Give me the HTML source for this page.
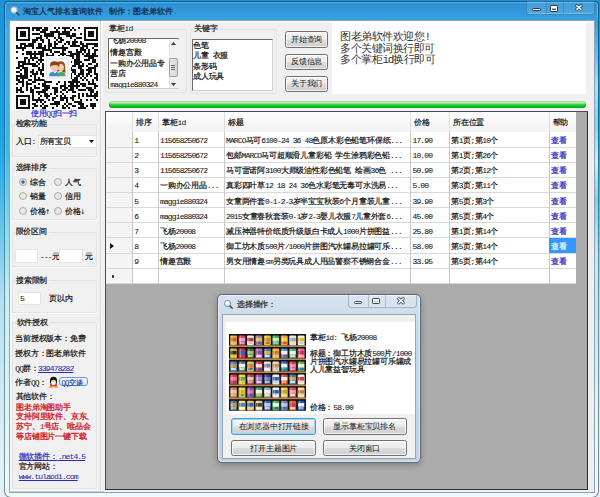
<!DOCTYPE html>
<html><head><meta charset="utf-8"><style>
html,body{margin:0;padding:0;width:600px;height:497px;overflow:hidden;position:relative;background:#fff}
.a{position:absolute}
.t{white-space:nowrap;font-family:"Liberation Sans",sans-serif;line-height:9px;-webkit-text-stroke-width:0.2px}
.m{font-family:"Liberation Mono",monospace;font-size:1em;letter-spacing:-0.109em;-webkit-text-stroke-width:0.05px}
svg{display:block}
</style></head><body>
<div class="a " style="left:0px;top:0px;width:600px;height:497px;background:linear-gradient(to bottom,#1c94d4 0%,#1aa2e2 25%,#20acea 32%,#60c4ec 45%,#b0e0f0 60%,#c8e8f4 75%,#deeff6 90%,#e6f2f6 100%)"></div><div class="a " style="left:4px;top:1px;width:595px;height:497px;border-radius:4px 4px 7px 7px;background:linear-gradient(to bottom,#0c5a8c 0%,#1a6e98 25%,#4a8a9c 45%,#72909a 60%,#788c92 100%)"></div><div class="a " style="left:5px;top:2px;width:593px;height:495px;border-radius:3px 3px 6px 6px;background:linear-gradient(to bottom,#5eb4e4 0%,#60c8f0 30%,#a0ecf4 55%,#c4f6f8 65%,#e0fafa 85%,#f0fcfc 100%)"></div><div class="a " style="left:6px;top:3px;width:591px;height:493px;border-radius:2px 2px 5px 5px;background:linear-gradient(to bottom,#2e90d4 0%,#36a2e0 3.6%,#4aaae0 5%,#38b8ec 30%,#80d8f0 45%,#c4f2f6 60%,#dcf6f6 85%,#eefafa 100%)"></div><div class="a " style="left:594.5px;top:20px;width:3.5px;height:472px;background:linear-gradient(to bottom,#3aa0dc 0%,#5ab8e8 6%,#a8e2f4 14%,#7ad4f2 22%,#c8f2f8 30%,#78d6f0 38%,#c0eef6 50%,#b8ecf4 62%,#dcf6f8 80%,#eefafa 100%)"></div><svg class="a" style="left:9px;top:5px" width="12" height="12" viewBox="0 0 12 12"><circle cx="5" cy="5" r="3.3" fill="#dff2fb" stroke="#8aa8b8" stroke-width="1.2"/><circle cx="4.2" cy="4.2" r="1.2" fill="#fff"/><line x1="7.3" y1="7.3" x2="10.5" y2="10.5" stroke="#3a4a5a" stroke-width="1.6"/></svg><div class="a t " style="left:23.3px;top:7px;font-size:8px;color:#10223a">淘宝人气排名查询软件</div><div class="a t " style="left:109.2px;top:7px;font-size:8px;color:#10223a">制作</div><div class="a t " style="left:125px;top:7px;font-size:8px;color:#10223a">：</div><div class="a t " style="left:133.2px;top:7px;font-size:8px;color:#10223a">图老弟软件</div><div class="a " style="left:526px;top:1px;width:68.7px;height:13.5px;border:1px solid rgba(30,60,90,0.30);border-top:none;border-radius:0 0 4px 4px;box-sizing:border-box;box-shadow:inset 0 -1px 0 rgba(255,255,255,0.25);background:rgba(255,255,255,0.12)"></div><div class="a " style="left:546px;top:1px;width:1px;height:12.5px;background:rgba(30,60,90,0.22)"></div><div class="a " style="left:563.3px;top:1px;width:1px;height:12.5px;background:rgba(30,60,90,0.22)"></div><div class="a " style="left:532.3px;top:8.2px;width:8.4px;height:2.8px;background:#fff;border:1px solid #2a3a4a;border-radius:1.5px;box-sizing:border-box"></div><div class="a " style="left:550px;top:5.3px;width:8px;height:6.4px;border:1px solid #2a3a4a;border-radius:1.5px;box-sizing:border-box;background:#5a6470;box-shadow:inset 0 0 0 1px #fff,inset 0 1.5px 0 1px #fff"></div><svg class="a" style="left:575px;top:4.2px;overflow:visible" width="7.8" height="7.2" viewBox="0 0 7.8 7.2"><path d="M1.8 1.8 L6.0 5.4 M6.0 1.8 L1.8 5.4" stroke="#2a3a4a" stroke-width="3.2" stroke-linecap="round" opacity="0.85"/><path d="M1.8 1.8 L6.0 5.4 M6.0 1.8 L1.8 5.4" stroke="#fff" stroke-width="1.5" stroke-linecap="round"/></svg><div class="a " style="left:9px;top:20px;width:585.5px;height:472.5px;background:#f0f0f0;border:1px solid #8aa2b2;box-sizing:border-box;box-shadow:inset 1px 1px 0 #fff"></div><div class="a " style="left:10px;top:21px;width:92px;height:89px;background:#fbfbfb"></div><svg class="a" style="left:16px;top:27px" width="82" height="82" viewBox="0 0 82 82" shape-rendering="crispEdges"><g fill="#111"><rect x="0" y="0" width="2" height="2"/><rect x="2" y="0" width="2" height="2"/><rect x="4" y="0" width="2" height="2"/><rect x="6" y="0" width="2" height="2"/><rect x="8" y="0" width="2" height="2"/><rect x="10" y="0" width="2" height="2"/><rect x="12" y="0" width="2" height="2"/><rect x="16" y="0" width="2" height="2"/><rect x="18" y="0" width="2" height="2"/><rect x="20" y="0" width="2" height="2"/><rect x="22" y="0" width="2" height="2"/><rect x="24" y="0" width="2" height="2"/><rect x="28" y="0" width="2" height="2"/><rect x="30" y="0" width="2" height="2"/><rect x="38" y="0" width="2" height="2"/><rect x="42" y="0" width="2" height="2"/><rect x="46" y="0" width="2" height="2"/><rect x="48" y="0" width="2" height="2"/><rect x="50" y="0" width="2" height="2"/><rect x="52" y="0" width="2" height="2"/><rect x="56" y="0" width="2" height="2"/><rect x="62" y="0" width="2" height="2"/><rect x="68" y="0" width="2" height="2"/><rect x="70" y="0" width="2" height="2"/><rect x="72" y="0" width="2" height="2"/><rect x="74" y="0" width="2" height="2"/><rect x="76" y="0" width="2" height="2"/><rect x="78" y="0" width="2" height="2"/><rect x="80" y="0" width="2" height="2"/><rect x="0" y="2" width="2" height="2"/><rect x="12" y="2" width="2" height="2"/><rect x="16" y="2" width="2" height="2"/><rect x="20" y="2" width="2" height="2"/><rect x="22" y="2" width="2" height="2"/><rect x="26" y="2" width="2" height="2"/><rect x="28" y="2" width="2" height="2"/><rect x="30" y="2" width="2" height="2"/><rect x="40" y="2" width="2" height="2"/><rect x="48" y="2" width="2" height="2"/><rect x="54" y="2" width="2" height="2"/><rect x="58" y="2" width="2" height="2"/><rect x="68" y="2" width="2" height="2"/><rect x="80" y="2" width="2" height="2"/><rect x="0" y="4" width="2" height="2"/><rect x="4" y="4" width="2" height="2"/><rect x="6" y="4" width="2" height="2"/><rect x="8" y="4" width="2" height="2"/><rect x="12" y="4" width="2" height="2"/><rect x="24" y="4" width="2" height="2"/><rect x="26" y="4" width="2" height="2"/><rect x="28" y="4" width="2" height="2"/><rect x="34" y="4" width="2" height="2"/><rect x="36" y="4" width="2" height="2"/><rect x="38" y="4" width="2" height="2"/><rect x="40" y="4" width="2" height="2"/><rect x="42" y="4" width="2" height="2"/><rect x="46" y="4" width="2" height="2"/><rect x="48" y="4" width="2" height="2"/><rect x="50" y="4" width="2" height="2"/><rect x="52" y="4" width="2" height="2"/><rect x="68" y="4" width="2" height="2"/><rect x="72" y="4" width="2" height="2"/><rect x="74" y="4" width="2" height="2"/><rect x="76" y="4" width="2" height="2"/><rect x="80" y="4" width="2" height="2"/><rect x="0" y="6" width="2" height="2"/><rect x="4" y="6" width="2" height="2"/><rect x="6" y="6" width="2" height="2"/><rect x="8" y="6" width="2" height="2"/><rect x="12" y="6" width="2" height="2"/><rect x="16" y="6" width="2" height="2"/><rect x="18" y="6" width="2" height="2"/><rect x="20" y="6" width="2" height="2"/><rect x="22" y="6" width="2" height="2"/><rect x="28" y="6" width="2" height="2"/><rect x="30" y="6" width="2" height="2"/><rect x="32" y="6" width="2" height="2"/><rect x="34" y="6" width="2" height="2"/><rect x="36" y="6" width="2" height="2"/><rect x="42" y="6" width="2" height="2"/><rect x="44" y="6" width="2" height="2"/><rect x="46" y="6" width="2" height="2"/><rect x="48" y="6" width="2" height="2"/><rect x="50" y="6" width="2" height="2"/><rect x="52" y="6" width="2" height="2"/><rect x="56" y="6" width="2" height="2"/><rect x="58" y="6" width="2" height="2"/><rect x="64" y="6" width="2" height="2"/><rect x="68" y="6" width="2" height="2"/><rect x="72" y="6" width="2" height="2"/><rect x="74" y="6" width="2" height="2"/><rect x="76" y="6" width="2" height="2"/><rect x="80" y="6" width="2" height="2"/><rect x="0" y="8" width="2" height="2"/><rect x="4" y="8" width="2" height="2"/><rect x="6" y="8" width="2" height="2"/><rect x="8" y="8" width="2" height="2"/><rect x="12" y="8" width="2" height="2"/><rect x="24" y="8" width="2" height="2"/><rect x="28" y="8" width="2" height="2"/><rect x="30" y="8" width="2" height="2"/><rect x="32" y="8" width="2" height="2"/><rect x="34" y="8" width="2" height="2"/><rect x="36" y="8" width="2" height="2"/><rect x="42" y="8" width="2" height="2"/><rect x="50" y="8" width="2" height="2"/><rect x="52" y="8" width="2" height="2"/><rect x="54" y="8" width="2" height="2"/><rect x="56" y="8" width="2" height="2"/><rect x="58" y="8" width="2" height="2"/><rect x="68" y="8" width="2" height="2"/><rect x="72" y="8" width="2" height="2"/><rect x="74" y="8" width="2" height="2"/><rect x="76" y="8" width="2" height="2"/><rect x="80" y="8" width="2" height="2"/><rect x="0" y="10" width="2" height="2"/><rect x="12" y="10" width="2" height="2"/><rect x="20" y="10" width="2" height="2"/><rect x="22" y="10" width="2" height="2"/><rect x="24" y="10" width="2" height="2"/><rect x="30" y="10" width="2" height="2"/><rect x="38" y="10" width="2" height="2"/><rect x="42" y="10" width="2" height="2"/><rect x="44" y="10" width="2" height="2"/><rect x="54" y="10" width="2" height="2"/><rect x="60" y="10" width="2" height="2"/><rect x="62" y="10" width="2" height="2"/><rect x="64" y="10" width="2" height="2"/><rect x="68" y="10" width="2" height="2"/><rect x="80" y="10" width="2" height="2"/><rect x="0" y="12" width="2" height="2"/><rect x="2" y="12" width="2" height="2"/><rect x="4" y="12" width="2" height="2"/><rect x="6" y="12" width="2" height="2"/><rect x="8" y="12" width="2" height="2"/><rect x="10" y="12" width="2" height="2"/><rect x="12" y="12" width="2" height="2"/><rect x="16" y="12" width="2" height="2"/><rect x="18" y="12" width="2" height="2"/><rect x="20" y="12" width="2" height="2"/><rect x="24" y="12" width="2" height="2"/><rect x="26" y="12" width="2" height="2"/><rect x="32" y="12" width="2" height="2"/><rect x="40" y="12" width="2" height="2"/><rect x="44" y="12" width="2" height="2"/><rect x="46" y="12" width="2" height="2"/><rect x="58" y="12" width="2" height="2"/><rect x="68" y="12" width="2" height="2"/><rect x="70" y="12" width="2" height="2"/><rect x="72" y="12" width="2" height="2"/><rect x="74" y="12" width="2" height="2"/><rect x="76" y="12" width="2" height="2"/><rect x="78" y="12" width="2" height="2"/><rect x="80" y="12" width="2" height="2"/><rect x="16" y="14" width="2" height="2"/><rect x="18" y="14" width="2" height="2"/><rect x="26" y="14" width="2" height="2"/><rect x="32" y="14" width="2" height="2"/><rect x="38" y="14" width="2" height="2"/><rect x="42" y="14" width="2" height="2"/><rect x="44" y="14" width="2" height="2"/><rect x="50" y="14" width="2" height="2"/><rect x="52" y="14" width="2" height="2"/><rect x="56" y="14" width="2" height="2"/><rect x="58" y="14" width="2" height="2"/><rect x="60" y="14" width="2" height="2"/><rect x="64" y="14" width="2" height="2"/><rect x="4" y="16" width="2" height="2"/><rect x="6" y="16" width="2" height="2"/><rect x="8" y="16" width="2" height="2"/><rect x="12" y="16" width="2" height="2"/><rect x="14" y="16" width="2" height="2"/><rect x="16" y="16" width="2" height="2"/><rect x="22" y="16" width="2" height="2"/><rect x="24" y="16" width="2" height="2"/><rect x="32" y="16" width="2" height="2"/><rect x="34" y="16" width="2" height="2"/><rect x="38" y="16" width="2" height="2"/><rect x="40" y="16" width="2" height="2"/><rect x="48" y="16" width="2" height="2"/><rect x="52" y="16" width="2" height="2"/><rect x="56" y="16" width="2" height="2"/><rect x="58" y="16" width="2" height="2"/><rect x="64" y="16" width="2" height="2"/><rect x="66" y="16" width="2" height="2"/><rect x="70" y="16" width="2" height="2"/><rect x="72" y="16" width="2" height="2"/><rect x="74" y="16" width="2" height="2"/><rect x="76" y="16" width="2" height="2"/><rect x="78" y="16" width="2" height="2"/><rect x="80" y="16" width="2" height="2"/><rect x="0" y="18" width="2" height="2"/><rect x="4" y="18" width="2" height="2"/><rect x="8" y="18" width="2" height="2"/><rect x="10" y="18" width="2" height="2"/><rect x="12" y="18" width="2" height="2"/><rect x="14" y="18" width="2" height="2"/><rect x="16" y="18" width="2" height="2"/><rect x="22" y="18" width="2" height="2"/><rect x="24" y="18" width="2" height="2"/><rect x="28" y="18" width="2" height="2"/><rect x="32" y="18" width="2" height="2"/><rect x="34" y="18" width="2" height="2"/><rect x="38" y="18" width="2" height="2"/><rect x="46" y="18" width="2" height="2"/><rect x="54" y="18" width="2" height="2"/><rect x="56" y="18" width="2" height="2"/><rect x="58" y="18" width="2" height="2"/><rect x="60" y="18" width="2" height="2"/><rect x="62" y="18" width="2" height="2"/><rect x="66" y="18" width="2" height="2"/><rect x="68" y="18" width="2" height="2"/><rect x="70" y="18" width="2" height="2"/><rect x="78" y="18" width="2" height="2"/><rect x="80" y="18" width="2" height="2"/><rect x="0" y="20" width="2" height="2"/><rect x="2" y="20" width="2" height="2"/><rect x="4" y="20" width="2" height="2"/><rect x="6" y="20" width="2" height="2"/><rect x="8" y="20" width="2" height="2"/><rect x="16" y="20" width="2" height="2"/><rect x="20" y="20" width="2" height="2"/><rect x="22" y="20" width="2" height="2"/><rect x="24" y="20" width="2" height="2"/><rect x="26" y="20" width="2" height="2"/><rect x="28" y="20" width="2" height="2"/><rect x="32" y="20" width="2" height="2"/><rect x="36" y="20" width="2" height="2"/><rect x="38" y="20" width="2" height="2"/><rect x="40" y="20" width="2" height="2"/><rect x="42" y="20" width="2" height="2"/><rect x="44" y="20" width="2" height="2"/><rect x="46" y="20" width="2" height="2"/><rect x="48" y="20" width="2" height="2"/><rect x="50" y="20" width="2" height="2"/><rect x="64" y="20" width="2" height="2"/><rect x="66" y="20" width="2" height="2"/><rect x="70" y="20" width="2" height="2"/><rect x="76" y="20" width="2" height="2"/><rect x="6" y="22" width="2" height="2"/><rect x="26" y="22" width="2" height="2"/><rect x="28" y="22" width="2" height="2"/><rect x="30" y="22" width="2" height="2"/><rect x="32" y="22" width="2" height="2"/><rect x="34" y="22" width="2" height="2"/><rect x="46" y="22" width="2" height="2"/><rect x="48" y="22" width="2" height="2"/><rect x="60" y="22" width="2" height="2"/><rect x="64" y="22" width="2" height="2"/><rect x="66" y="22" width="2" height="2"/><rect x="68" y="22" width="2" height="2"/><rect x="72" y="22" width="2" height="2"/><rect x="78" y="22" width="2" height="2"/><rect x="80" y="22" width="2" height="2"/><rect x="0" y="24" width="2" height="2"/><rect x="10" y="24" width="2" height="2"/><rect x="12" y="24" width="2" height="2"/><rect x="14" y="24" width="2" height="2"/><rect x="18" y="24" width="2" height="2"/><rect x="22" y="24" width="2" height="2"/><rect x="24" y="24" width="2" height="2"/><rect x="26" y="24" width="2" height="2"/><rect x="34" y="24" width="2" height="2"/><rect x="38" y="24" width="2" height="2"/><rect x="40" y="24" width="2" height="2"/><rect x="42" y="24" width="2" height="2"/><rect x="46" y="24" width="2" height="2"/><rect x="52" y="24" width="2" height="2"/><rect x="54" y="24" width="2" height="2"/><rect x="60" y="24" width="2" height="2"/><rect x="62" y="24" width="2" height="2"/><rect x="64" y="24" width="2" height="2"/><rect x="68" y="24" width="2" height="2"/><rect x="72" y="24" width="2" height="2"/><rect x="78" y="24" width="2" height="2"/><rect x="6" y="26" width="2" height="2"/><rect x="10" y="26" width="2" height="2"/><rect x="12" y="26" width="2" height="2"/><rect x="14" y="26" width="2" height="2"/><rect x="16" y="26" width="2" height="2"/><rect x="18" y="26" width="2" height="2"/><rect x="20" y="26" width="2" height="2"/><rect x="22" y="26" width="2" height="2"/><rect x="24" y="26" width="2" height="2"/><rect x="26" y="26" width="2" height="2"/><rect x="30" y="26" width="2" height="2"/><rect x="36" y="26" width="2" height="2"/><rect x="44" y="26" width="2" height="2"/><rect x="46" y="26" width="2" height="2"/><rect x="48" y="26" width="2" height="2"/><rect x="54" y="26" width="2" height="2"/><rect x="56" y="26" width="2" height="2"/><rect x="58" y="26" width="2" height="2"/><rect x="60" y="26" width="2" height="2"/><rect x="62" y="26" width="2" height="2"/><rect x="66" y="26" width="2" height="2"/><rect x="70" y="26" width="2" height="2"/><rect x="72" y="26" width="2" height="2"/><rect x="76" y="26" width="2" height="2"/><rect x="78" y="26" width="2" height="2"/><rect x="14" y="28" width="2" height="2"/><rect x="18" y="28" width="2" height="2"/><rect x="24" y="28" width="2" height="2"/><rect x="26" y="28" width="2" height="2"/><rect x="30" y="28" width="2" height="2"/><rect x="32" y="28" width="2" height="2"/><rect x="34" y="28" width="2" height="2"/><rect x="36" y="28" width="2" height="2"/><rect x="42" y="28" width="2" height="2"/><rect x="46" y="28" width="2" height="2"/><rect x="50" y="28" width="2" height="2"/><rect x="52" y="28" width="2" height="2"/><rect x="54" y="28" width="2" height="2"/><rect x="56" y="28" width="2" height="2"/><rect x="60" y="28" width="2" height="2"/><rect x="62" y="28" width="2" height="2"/><rect x="68" y="28" width="2" height="2"/><rect x="70" y="28" width="2" height="2"/><rect x="72" y="28" width="2" height="2"/><rect x="74" y="28" width="2" height="2"/><rect x="76" y="28" width="2" height="2"/><rect x="78" y="28" width="2" height="2"/><rect x="80" y="28" width="2" height="2"/><rect x="0" y="30" width="2" height="2"/><rect x="8" y="30" width="2" height="2"/><rect x="10" y="30" width="2" height="2"/><rect x="14" y="30" width="2" height="2"/><rect x="16" y="30" width="2" height="2"/><rect x="18" y="30" width="2" height="2"/><rect x="20" y="30" width="2" height="2"/><rect x="24" y="30" width="2" height="2"/><rect x="32" y="30" width="2" height="2"/><rect x="34" y="30" width="2" height="2"/><rect x="36" y="30" width="2" height="2"/><rect x="38" y="30" width="2" height="2"/><rect x="40" y="30" width="2" height="2"/><rect x="48" y="30" width="2" height="2"/><rect x="50" y="30" width="2" height="2"/><rect x="56" y="30" width="2" height="2"/><rect x="60" y="30" width="2" height="2"/><rect x="62" y="30" width="2" height="2"/><rect x="72" y="30" width="2" height="2"/><rect x="74" y="30" width="2" height="2"/><rect x="76" y="30" width="2" height="2"/><rect x="8" y="32" width="2" height="2"/><rect x="12" y="32" width="2" height="2"/><rect x="16" y="32" width="2" height="2"/><rect x="22" y="32" width="2" height="2"/><rect x="24" y="32" width="2" height="2"/><rect x="26" y="32" width="2" height="2"/><rect x="32" y="32" width="2" height="2"/><rect x="34" y="32" width="2" height="2"/><rect x="40" y="32" width="2" height="2"/><rect x="42" y="32" width="2" height="2"/><rect x="46" y="32" width="2" height="2"/><rect x="48" y="32" width="2" height="2"/><rect x="50" y="32" width="2" height="2"/><rect x="58" y="32" width="2" height="2"/><rect x="60" y="32" width="2" height="2"/><rect x="62" y="32" width="2" height="2"/><rect x="68" y="32" width="2" height="2"/><rect x="70" y="32" width="2" height="2"/><rect x="72" y="32" width="2" height="2"/><rect x="76" y="32" width="2" height="2"/><rect x="78" y="32" width="2" height="2"/><rect x="2" y="34" width="2" height="2"/><rect x="4" y="34" width="2" height="2"/><rect x="6" y="34" width="2" height="2"/><rect x="8" y="34" width="2" height="2"/><rect x="12" y="34" width="2" height="2"/><rect x="20" y="34" width="2" height="2"/><rect x="24" y="34" width="2" height="2"/><rect x="28" y="34" width="2" height="2"/><rect x="30" y="34" width="2" height="2"/><rect x="34" y="34" width="2" height="2"/><rect x="38" y="34" width="2" height="2"/><rect x="40" y="34" width="2" height="2"/><rect x="42" y="34" width="2" height="2"/><rect x="44" y="34" width="2" height="2"/><rect x="50" y="34" width="2" height="2"/><rect x="52" y="34" width="2" height="2"/><rect x="54" y="34" width="2" height="2"/><rect x="58" y="34" width="2" height="2"/><rect x="60" y="34" width="2" height="2"/><rect x="62" y="34" width="2" height="2"/><rect x="64" y="34" width="2" height="2"/><rect x="76" y="34" width="2" height="2"/><rect x="78" y="34" width="2" height="2"/><rect x="2" y="36" width="2" height="2"/><rect x="6" y="36" width="2" height="2"/><rect x="8" y="36" width="2" height="2"/><rect x="10" y="36" width="2" height="2"/><rect x="12" y="36" width="2" height="2"/><rect x="14" y="36" width="2" height="2"/><rect x="16" y="36" width="2" height="2"/><rect x="18" y="36" width="2" height="2"/><rect x="22" y="36" width="2" height="2"/><rect x="26" y="36" width="2" height="2"/><rect x="28" y="36" width="2" height="2"/><rect x="34" y="36" width="2" height="2"/><rect x="36" y="36" width="2" height="2"/><rect x="38" y="36" width="2" height="2"/><rect x="40" y="36" width="2" height="2"/><rect x="44" y="36" width="2" height="2"/><rect x="46" y="36" width="2" height="2"/><rect x="50" y="36" width="2" height="2"/><rect x="52" y="36" width="2" height="2"/><rect x="58" y="36" width="2" height="2"/><rect x="60" y="36" width="2" height="2"/><rect x="62" y="36" width="2" height="2"/><rect x="66" y="36" width="2" height="2"/><rect x="72" y="36" width="2" height="2"/><rect x="74" y="36" width="2" height="2"/><rect x="80" y="36" width="2" height="2"/><rect x="2" y="38" width="2" height="2"/><rect x="4" y="38" width="2" height="2"/><rect x="6" y="38" width="2" height="2"/><rect x="16" y="38" width="2" height="2"/><rect x="18" y="38" width="2" height="2"/><rect x="20" y="38" width="2" height="2"/><rect x="26" y="38" width="2" height="2"/><rect x="28" y="38" width="2" height="2"/><rect x="30" y="38" width="2" height="2"/><rect x="32" y="38" width="2" height="2"/><rect x="36" y="38" width="2" height="2"/><rect x="48" y="38" width="2" height="2"/><rect x="50" y="38" width="2" height="2"/><rect x="52" y="38" width="2" height="2"/><rect x="56" y="38" width="2" height="2"/><rect x="58" y="38" width="2" height="2"/><rect x="62" y="38" width="2" height="2"/><rect x="64" y="38" width="2" height="2"/><rect x="66" y="38" width="2" height="2"/><rect x="70" y="38" width="2" height="2"/><rect x="78" y="38" width="2" height="2"/><rect x="80" y="38" width="2" height="2"/><rect x="0" y="40" width="2" height="2"/><rect x="2" y="40" width="2" height="2"/><rect x="6" y="40" width="2" height="2"/><rect x="8" y="40" width="2" height="2"/><rect x="10" y="40" width="2" height="2"/><rect x="22" y="40" width="2" height="2"/><rect x="26" y="40" width="2" height="2"/><rect x="30" y="40" width="2" height="2"/><rect x="34" y="40" width="2" height="2"/><rect x="36" y="40" width="2" height="2"/><rect x="38" y="40" width="2" height="2"/><rect x="40" y="40" width="2" height="2"/><rect x="46" y="40" width="2" height="2"/><rect x="48" y="40" width="2" height="2"/><rect x="54" y="40" width="2" height="2"/><rect x="62" y="40" width="2" height="2"/><rect x="64" y="40" width="2" height="2"/><rect x="72" y="40" width="2" height="2"/><rect x="74" y="40" width="2" height="2"/><rect x="76" y="40" width="2" height="2"/><rect x="78" y="40" width="2" height="2"/><rect x="4" y="42" width="2" height="2"/><rect x="8" y="42" width="2" height="2"/><rect x="10" y="42" width="2" height="2"/><rect x="16" y="42" width="2" height="2"/><rect x="22" y="42" width="2" height="2"/><rect x="24" y="42" width="2" height="2"/><rect x="26" y="42" width="2" height="2"/><rect x="28" y="42" width="2" height="2"/><rect x="30" y="42" width="2" height="2"/><rect x="36" y="42" width="2" height="2"/><rect x="38" y="42" width="2" height="2"/><rect x="40" y="42" width="2" height="2"/><rect x="44" y="42" width="2" height="2"/><rect x="46" y="42" width="2" height="2"/><rect x="48" y="42" width="2" height="2"/><rect x="54" y="42" width="2" height="2"/><rect x="56" y="42" width="2" height="2"/><rect x="58" y="42" width="2" height="2"/><rect x="64" y="42" width="2" height="2"/><rect x="66" y="42" width="2" height="2"/><rect x="70" y="42" width="2" height="2"/><rect x="72" y="42" width="2" height="2"/><rect x="74" y="42" width="2" height="2"/><rect x="78" y="42" width="2" height="2"/><rect x="0" y="44" width="2" height="2"/><rect x="2" y="44" width="2" height="2"/><rect x="8" y="44" width="2" height="2"/><rect x="10" y="44" width="2" height="2"/><rect x="14" y="44" width="2" height="2"/><rect x="16" y="44" width="2" height="2"/><rect x="20" y="44" width="2" height="2"/><rect x="24" y="44" width="2" height="2"/><rect x="28" y="44" width="2" height="2"/><rect x="30" y="44" width="2" height="2"/><rect x="32" y="44" width="2" height="2"/><rect x="40" y="44" width="2" height="2"/><rect x="44" y="44" width="2" height="2"/><rect x="48" y="44" width="2" height="2"/><rect x="50" y="44" width="2" height="2"/><rect x="56" y="44" width="2" height="2"/><rect x="58" y="44" width="2" height="2"/><rect x="64" y="44" width="2" height="2"/><rect x="66" y="44" width="2" height="2"/><rect x="72" y="44" width="2" height="2"/><rect x="74" y="44" width="2" height="2"/><rect x="78" y="44" width="2" height="2"/><rect x="4" y="46" width="2" height="2"/><rect x="8" y="46" width="2" height="2"/><rect x="10" y="46" width="2" height="2"/><rect x="16" y="46" width="2" height="2"/><rect x="18" y="46" width="2" height="2"/><rect x="20" y="46" width="2" height="2"/><rect x="24" y="46" width="2" height="2"/><rect x="26" y="46" width="2" height="2"/><rect x="28" y="46" width="2" height="2"/><rect x="34" y="46" width="2" height="2"/><rect x="40" y="46" width="2" height="2"/><rect x="44" y="46" width="2" height="2"/><rect x="52" y="46" width="2" height="2"/><rect x="54" y="46" width="2" height="2"/><rect x="58" y="46" width="2" height="2"/><rect x="62" y="46" width="2" height="2"/><rect x="64" y="46" width="2" height="2"/><rect x="66" y="46" width="2" height="2"/><rect x="70" y="46" width="2" height="2"/><rect x="72" y="46" width="2" height="2"/><rect x="78" y="46" width="2" height="2"/><rect x="80" y="46" width="2" height="2"/><rect x="0" y="48" width="2" height="2"/><rect x="2" y="48" width="2" height="2"/><rect x="4" y="48" width="2" height="2"/><rect x="6" y="48" width="2" height="2"/><rect x="8" y="48" width="2" height="2"/><rect x="10" y="48" width="2" height="2"/><rect x="14" y="48" width="2" height="2"/><rect x="18" y="48" width="2" height="2"/><rect x="26" y="48" width="2" height="2"/><rect x="30" y="48" width="2" height="2"/><rect x="34" y="48" width="2" height="2"/><rect x="44" y="48" width="2" height="2"/><rect x="48" y="48" width="2" height="2"/><rect x="54" y="48" width="2" height="2"/><rect x="60" y="48" width="2" height="2"/><rect x="62" y="48" width="2" height="2"/><rect x="66" y="48" width="2" height="2"/><rect x="70" y="48" width="2" height="2"/><rect x="74" y="48" width="2" height="2"/><rect x="80" y="48" width="2" height="2"/><rect x="0" y="50" width="2" height="2"/><rect x="4" y="50" width="2" height="2"/><rect x="6" y="50" width="2" height="2"/><rect x="8" y="50" width="2" height="2"/><rect x="10" y="50" width="2" height="2"/><rect x="18" y="50" width="2" height="2"/><rect x="22" y="50" width="2" height="2"/><rect x="28" y="50" width="2" height="2"/><rect x="38" y="50" width="2" height="2"/><rect x="44" y="50" width="2" height="2"/><rect x="48" y="50" width="2" height="2"/><rect x="54" y="50" width="2" height="2"/><rect x="58" y="50" width="2" height="2"/><rect x="60" y="50" width="2" height="2"/><rect x="64" y="50" width="2" height="2"/><rect x="68" y="50" width="2" height="2"/><rect x="78" y="50" width="2" height="2"/><rect x="80" y="50" width="2" height="2"/><rect x="0" y="52" width="2" height="2"/><rect x="2" y="52" width="2" height="2"/><rect x="6" y="52" width="2" height="2"/><rect x="12" y="52" width="2" height="2"/><rect x="14" y="52" width="2" height="2"/><rect x="18" y="52" width="2" height="2"/><rect x="20" y="52" width="2" height="2"/><rect x="22" y="52" width="2" height="2"/><rect x="24" y="52" width="2" height="2"/><rect x="26" y="52" width="2" height="2"/><rect x="28" y="52" width="2" height="2"/><rect x="34" y="52" width="2" height="2"/><rect x="38" y="52" width="2" height="2"/><rect x="40" y="52" width="2" height="2"/><rect x="44" y="52" width="2" height="2"/><rect x="46" y="52" width="2" height="2"/><rect x="48" y="52" width="2" height="2"/><rect x="56" y="52" width="2" height="2"/><rect x="58" y="52" width="2" height="2"/><rect x="60" y="52" width="2" height="2"/><rect x="66" y="52" width="2" height="2"/><rect x="70" y="52" width="2" height="2"/><rect x="76" y="52" width="2" height="2"/><rect x="80" y="52" width="2" height="2"/><rect x="2" y="54" width="2" height="2"/><rect x="4" y="54" width="2" height="2"/><rect x="6" y="54" width="2" height="2"/><rect x="10" y="54" width="2" height="2"/><rect x="16" y="54" width="2" height="2"/><rect x="18" y="54" width="2" height="2"/><rect x="28" y="54" width="2" height="2"/><rect x="30" y="54" width="2" height="2"/><rect x="32" y="54" width="2" height="2"/><rect x="34" y="54" width="2" height="2"/><rect x="42" y="54" width="2" height="2"/><rect x="48" y="54" width="2" height="2"/><rect x="52" y="54" width="2" height="2"/><rect x="54" y="54" width="2" height="2"/><rect x="56" y="54" width="2" height="2"/><rect x="58" y="54" width="2" height="2"/><rect x="60" y="54" width="2" height="2"/><rect x="62" y="54" width="2" height="2"/><rect x="72" y="54" width="2" height="2"/><rect x="76" y="54" width="2" height="2"/><rect x="0" y="56" width="2" height="2"/><rect x="6" y="56" width="2" height="2"/><rect x="10" y="56" width="2" height="2"/><rect x="12" y="56" width="2" height="2"/><rect x="14" y="56" width="2" height="2"/><rect x="22" y="56" width="2" height="2"/><rect x="26" y="56" width="2" height="2"/><rect x="28" y="56" width="2" height="2"/><rect x="40" y="56" width="2" height="2"/><rect x="48" y="56" width="2" height="2"/><rect x="54" y="56" width="2" height="2"/><rect x="56" y="56" width="2" height="2"/><rect x="60" y="56" width="2" height="2"/><rect x="64" y="56" width="2" height="2"/><rect x="66" y="56" width="2" height="2"/><rect x="68" y="56" width="2" height="2"/><rect x="72" y="56" width="2" height="2"/><rect x="74" y="56" width="2" height="2"/><rect x="76" y="56" width="2" height="2"/><rect x="78" y="56" width="2" height="2"/><rect x="6" y="58" width="2" height="2"/><rect x="10" y="58" width="2" height="2"/><rect x="18" y="58" width="2" height="2"/><rect x="26" y="58" width="2" height="2"/><rect x="28" y="58" width="2" height="2"/><rect x="30" y="58" width="2" height="2"/><rect x="32" y="58" width="2" height="2"/><rect x="44" y="58" width="2" height="2"/><rect x="46" y="58" width="2" height="2"/><rect x="48" y="58" width="2" height="2"/><rect x="52" y="58" width="2" height="2"/><rect x="54" y="58" width="2" height="2"/><rect x="56" y="58" width="2" height="2"/><rect x="58" y="58" width="2" height="2"/><rect x="60" y="58" width="2" height="2"/><rect x="62" y="58" width="2" height="2"/><rect x="66" y="58" width="2" height="2"/><rect x="68" y="58" width="2" height="2"/><rect x="78" y="58" width="2" height="2"/><rect x="80" y="58" width="2" height="2"/><rect x="0" y="60" width="2" height="2"/><rect x="4" y="60" width="2" height="2"/><rect x="10" y="60" width="2" height="2"/><rect x="14" y="60" width="2" height="2"/><rect x="18" y="60" width="2" height="2"/><rect x="20" y="60" width="2" height="2"/><rect x="22" y="60" width="2" height="2"/><rect x="28" y="60" width="2" height="2"/><rect x="30" y="60" width="2" height="2"/><rect x="32" y="60" width="2" height="2"/><rect x="36" y="60" width="2" height="2"/><rect x="38" y="60" width="2" height="2"/><rect x="40" y="60" width="2" height="2"/><rect x="44" y="60" width="2" height="2"/><rect x="48" y="60" width="2" height="2"/><rect x="50" y="60" width="2" height="2"/><rect x="54" y="60" width="2" height="2"/><rect x="56" y="60" width="2" height="2"/><rect x="60" y="60" width="2" height="2"/><rect x="70" y="60" width="2" height="2"/><rect x="72" y="60" width="2" height="2"/><rect x="74" y="60" width="2" height="2"/><rect x="78" y="60" width="2" height="2"/><rect x="0" y="62" width="2" height="2"/><rect x="2" y="62" width="2" height="2"/><rect x="4" y="62" width="2" height="2"/><rect x="10" y="62" width="2" height="2"/><rect x="14" y="62" width="2" height="2"/><rect x="16" y="62" width="2" height="2"/><rect x="26" y="62" width="2" height="2"/><rect x="28" y="62" width="2" height="2"/><rect x="30" y="62" width="2" height="2"/><rect x="38" y="62" width="2" height="2"/><rect x="40" y="62" width="2" height="2"/><rect x="46" y="62" width="2" height="2"/><rect x="48" y="62" width="2" height="2"/><rect x="52" y="62" width="2" height="2"/><rect x="54" y="62" width="2" height="2"/><rect x="56" y="62" width="2" height="2"/><rect x="62" y="62" width="2" height="2"/><rect x="64" y="62" width="2" height="2"/><rect x="66" y="62" width="2" height="2"/><rect x="68" y="62" width="2" height="2"/><rect x="72" y="62" width="2" height="2"/><rect x="74" y="62" width="2" height="2"/><rect x="76" y="62" width="2" height="2"/><rect x="0" y="64" width="2" height="2"/><rect x="4" y="64" width="2" height="2"/><rect x="6" y="64" width="2" height="2"/><rect x="14" y="64" width="2" height="2"/><rect x="16" y="64" width="2" height="2"/><rect x="20" y="64" width="2" height="2"/><rect x="22" y="64" width="2" height="2"/><rect x="24" y="64" width="2" height="2"/><rect x="26" y="64" width="2" height="2"/><rect x="28" y="64" width="2" height="2"/><rect x="38" y="64" width="2" height="2"/><rect x="40" y="64" width="2" height="2"/><rect x="44" y="64" width="2" height="2"/><rect x="50" y="64" width="2" height="2"/><rect x="56" y="64" width="2" height="2"/><rect x="58" y="64" width="2" height="2"/><rect x="74" y="64" width="2" height="2"/><rect x="76" y="64" width="2" height="2"/><rect x="80" y="64" width="2" height="2"/><rect x="16" y="66" width="2" height="2"/><rect x="22" y="66" width="2" height="2"/><rect x="28" y="66" width="2" height="2"/><rect x="30" y="66" width="2" height="2"/><rect x="34" y="66" width="2" height="2"/><rect x="38" y="66" width="2" height="2"/><rect x="46" y="66" width="2" height="2"/><rect x="62" y="66" width="2" height="2"/><rect x="66" y="66" width="2" height="2"/><rect x="70" y="66" width="2" height="2"/><rect x="74" y="66" width="2" height="2"/><rect x="78" y="66" width="2" height="2"/><rect x="80" y="66" width="2" height="2"/><rect x="0" y="68" width="2" height="2"/><rect x="2" y="68" width="2" height="2"/><rect x="4" y="68" width="2" height="2"/><rect x="6" y="68" width="2" height="2"/><rect x="8" y="68" width="2" height="2"/><rect x="10" y="68" width="2" height="2"/><rect x="12" y="68" width="2" height="2"/><rect x="16" y="68" width="2" height="2"/><rect x="24" y="68" width="2" height="2"/><rect x="28" y="68" width="2" height="2"/><rect x="30" y="68" width="2" height="2"/><rect x="32" y="68" width="2" height="2"/><rect x="40" y="68" width="2" height="2"/><rect x="44" y="68" width="2" height="2"/><rect x="48" y="68" width="2" height="2"/><rect x="56" y="68" width="2" height="2"/><rect x="58" y="68" width="2" height="2"/><rect x="62" y="68" width="2" height="2"/><rect x="66" y="68" width="2" height="2"/><rect x="70" y="68" width="2" height="2"/><rect x="72" y="68" width="2" height="2"/><rect x="74" y="68" width="2" height="2"/><rect x="76" y="68" width="2" height="2"/><rect x="78" y="68" width="2" height="2"/><rect x="80" y="68" width="2" height="2"/><rect x="0" y="70" width="2" height="2"/><rect x="12" y="70" width="2" height="2"/><rect x="16" y="70" width="2" height="2"/><rect x="22" y="70" width="2" height="2"/><rect x="30" y="70" width="2" height="2"/><rect x="36" y="70" width="2" height="2"/><rect x="38" y="70" width="2" height="2"/><rect x="44" y="70" width="2" height="2"/><rect x="46" y="70" width="2" height="2"/><rect x="48" y="70" width="2" height="2"/><rect x="50" y="70" width="2" height="2"/><rect x="54" y="70" width="2" height="2"/><rect x="56" y="70" width="2" height="2"/><rect x="62" y="70" width="2" height="2"/><rect x="78" y="70" width="2" height="2"/><rect x="0" y="72" width="2" height="2"/><rect x="4" y="72" width="2" height="2"/><rect x="6" y="72" width="2" height="2"/><rect x="8" y="72" width="2" height="2"/><rect x="12" y="72" width="2" height="2"/><rect x="16" y="72" width="2" height="2"/><rect x="18" y="72" width="2" height="2"/><rect x="20" y="72" width="2" height="2"/><rect x="22" y="72" width="2" height="2"/><rect x="24" y="72" width="2" height="2"/><rect x="26" y="72" width="2" height="2"/><rect x="32" y="72" width="2" height="2"/><rect x="36" y="72" width="2" height="2"/><rect x="44" y="72" width="2" height="2"/><rect x="46" y="72" width="2" height="2"/><rect x="50" y="72" width="2" height="2"/><rect x="56" y="72" width="2" height="2"/><rect x="64" y="72" width="2" height="2"/><rect x="70" y="72" width="2" height="2"/><rect x="74" y="72" width="2" height="2"/><rect x="80" y="72" width="2" height="2"/><rect x="0" y="74" width="2" height="2"/><rect x="4" y="74" width="2" height="2"/><rect x="6" y="74" width="2" height="2"/><rect x="8" y="74" width="2" height="2"/><rect x="12" y="74" width="2" height="2"/><rect x="20" y="74" width="2" height="2"/><rect x="24" y="74" width="2" height="2"/><rect x="28" y="74" width="2" height="2"/><rect x="38" y="74" width="2" height="2"/><rect x="40" y="74" width="2" height="2"/><rect x="42" y="74" width="2" height="2"/><rect x="50" y="74" width="2" height="2"/><rect x="58" y="74" width="2" height="2"/><rect x="60" y="74" width="2" height="2"/><rect x="62" y="74" width="2" height="2"/><rect x="64" y="74" width="2" height="2"/><rect x="0" y="76" width="2" height="2"/><rect x="4" y="76" width="2" height="2"/><rect x="6" y="76" width="2" height="2"/><rect x="8" y="76" width="2" height="2"/><rect x="12" y="76" width="2" height="2"/><rect x="16" y="76" width="2" height="2"/><rect x="18" y="76" width="2" height="2"/><rect x="26" y="76" width="2" height="2"/><rect x="34" y="76" width="2" height="2"/><rect x="36" y="76" width="2" height="2"/><rect x="38" y="76" width="2" height="2"/><rect x="40" y="76" width="2" height="2"/><rect x="42" y="76" width="2" height="2"/><rect x="48" y="76" width="2" height="2"/><rect x="52" y="76" width="2" height="2"/><rect x="54" y="76" width="2" height="2"/><rect x="62" y="76" width="2" height="2"/><rect x="64" y="76" width="2" height="2"/><rect x="66" y="76" width="2" height="2"/><rect x="74" y="76" width="2" height="2"/><rect x="76" y="76" width="2" height="2"/><rect x="78" y="76" width="2" height="2"/><rect x="0" y="78" width="2" height="2"/><rect x="12" y="78" width="2" height="2"/><rect x="18" y="78" width="2" height="2"/><rect x="20" y="78" width="2" height="2"/><rect x="24" y="78" width="2" height="2"/><rect x="28" y="78" width="2" height="2"/><rect x="30" y="78" width="2" height="2"/><rect x="40" y="78" width="2" height="2"/><rect x="46" y="78" width="2" height="2"/><rect x="50" y="78" width="2" height="2"/><rect x="56" y="78" width="2" height="2"/><rect x="58" y="78" width="2" height="2"/><rect x="64" y="78" width="2" height="2"/><rect x="66" y="78" width="2" height="2"/><rect x="70" y="78" width="2" height="2"/><rect x="74" y="78" width="2" height="2"/><rect x="76" y="78" width="2" height="2"/><rect x="78" y="78" width="2" height="2"/><rect x="0" y="80" width="2" height="2"/><rect x="2" y="80" width="2" height="2"/><rect x="4" y="80" width="2" height="2"/><rect x="6" y="80" width="2" height="2"/><rect x="8" y="80" width="2" height="2"/><rect x="10" y="80" width="2" height="2"/><rect x="12" y="80" width="2" height="2"/><rect x="16" y="80" width="2" height="2"/><rect x="26" y="80" width="2" height="2"/><rect x="28" y="80" width="2" height="2"/><rect x="36" y="80" width="2" height="2"/><rect x="46" y="80" width="2" height="2"/><rect x="48" y="80" width="2" height="2"/><rect x="52" y="80" width="2" height="2"/><rect x="62" y="80" width="2" height="2"/><rect x="64" y="80" width="2" height="2"/><rect x="66" y="80" width="2" height="2"/><rect x="68" y="80" width="2" height="2"/><rect x="76" y="80" width="2" height="2"/></g></svg><div class="a " style="left:43.5px;top:55.5px;width:27px;height:25.5px;background:#fbfbfb;border-radius:3px"></div><svg class="a" style="left:46px;top:58px" width="22.5" height="21" viewBox="0 0 23 21">
<rect x="0.5" y="0.5" width="22" height="20" rx="2.5" fill="#f2f6f8" stroke="#dde4e8"/>
<path d="M3 18.5 Q3 13.5 9 13.5 Q13.5 13.5 14 18.5Z" fill="#3a8ad0"/><path d="M7 13.6 L9 15.5 L11 13.6Z" fill="#fff"/>
<path d="M11.5 18.5 Q11.5 14 15.5 14 Q20 14 20 18.5Z" fill="#4aa860"/>
<path d="M11 6 Q11 3 15 3 Q19.5 3 19.5 8 L20 15 Q17 14 15.5 13 Q12.5 13 11.5 14 Z" fill="#9a4a28"/>
<ellipse cx="15.3" cy="9.5" rx="3" ry="3.6" fill="#f6d2b4"/>
<path d="M4.2 7.5 Q4 3 8.8 3 Q13.5 3 13.6 7.5 L13.5 10 Q12 6 8.8 6.2 Q5.5 6 4.4 10Z" fill="#8a3e1a"/>
<ellipse cx="8.9" cy="9.5" rx="3.6" ry="4" fill="#f2c8a4"/>
<path d="M5 7.8 Q6 4.5 9 4.8 Q12.5 5 12.8 7.8 Q10 5.8 5 7.8Z" fill="#8a3e1a"/>
</svg><div class="a t " style="left:31px;top:109px;font-size:8px;letter-spacing:-0.4px;color:#2a2ad0">使用<span class="m">QQ</span>扫一扫</div><div class="a " style="left:100.3px;top:21px;width:1px;height:471px;background:#d8d8d8"></div><div class="a " style="left:101.3px;top:21px;width:1px;height:471px;background:#fafafa"></div><div class="a " style="left:12px;top:124px;width:85px;height:32.5px;border:1px solid #e3e3e3;box-sizing:border-box;box-shadow:1px 1px 0 #f8f8f8;border-radius:2px"></div><div class="a " style="left:12px;top:167.5px;width:85px;height:52.5px;border:1px solid #e3e3e3;box-sizing:border-box;box-shadow:1px 1px 0 #f8f8f8;border-radius:2px"></div><div class="a " style="left:12px;top:231.5px;width:85px;height:35.0px;border:1px solid #e3e3e3;box-sizing:border-box;box-shadow:1px 1px 0 #f8f8f8;border-radius:2px"></div><div class="a " style="left:12px;top:280px;width:85px;height:33px;border:1px solid #e3e3e3;box-sizing:border-box;box-shadow:1px 1px 0 #f8f8f8;border-radius:2px"></div><div class="a " style="left:12px;top:322px;width:85px;height:167px;border:1px solid #e3e3e3;box-sizing:border-box;box-shadow:1px 1px 0 #f8f8f8;border-radius:2px"></div><div class="a t " style="left:15.5px;top:119px;font-size:8px;letter-spacing:-0.2px;color:#111;background:#f0f0f0;padding:0 2px 0 1px;margin-left:-1px">检索功能</div><div class="a t " style="left:16px;top:137px;font-size:8px;letter-spacing:-0.2px;color:#111">入口<span class="m">:</span></div><div class="a " style="left:37.5px;top:135px;width:59.5px;height:12.5px;background:#fff;border:1px solid #e2e2e2;box-sizing:border-box"></div><div class="a t " style="left:39.5px;top:137px;font-size:8px;letter-spacing:-0.2px;color:#111">所有宝贝</div><svg class="a" style="left:89px;top:140px" width="5" height="3"><path d="M0 0H5L2.5 3Z" fill="#111"/></svg><div class="a t " style="left:15.5px;top:163px;font-size:8px;letter-spacing:-0.2px;color:#111;background:#f0f0f0;padding:0 2px 0 1px;margin-left:-1px">选择排序</div><svg class="a" style="left:18.5px;top:177.5px" width="8" height="8" viewBox="0 0 8 8"><circle cx="4" cy="4" r="3.5" fill="#e8e8e8" stroke="#9a9a9a" stroke-width="0.8"/><circle cx="4" cy="4" r="1.8" fill="#2a6cb0"/></svg><svg class="a" style="left:54px;top:177.5px" width="8" height="8" viewBox="0 0 8 8"><circle cx="4" cy="4" r="3.5" fill="#e8e8e8" stroke="#9a9a9a" stroke-width="0.8"/></svg><div class="a t " style="left:30px;top:177.5px;font-size:8px;letter-spacing:-0.2px;color:#111">综合</div><div class="a t " style="left:65px;top:177.5px;font-size:8px;letter-spacing:-0.2px;color:#111">人气</div><svg class="a" style="left:18.5px;top:192.0px" width="8" height="8" viewBox="0 0 8 8"><circle cx="4" cy="4" r="3.5" fill="#e8e8e8" stroke="#9a9a9a" stroke-width="0.8"/></svg><svg class="a" style="left:54px;top:192.0px" width="8" height="8" viewBox="0 0 8 8"><circle cx="4" cy="4" r="3.5" fill="#e8e8e8" stroke="#9a9a9a" stroke-width="0.8"/></svg><div class="a t " style="left:30px;top:192.0px;font-size:8px;letter-spacing:-0.2px;color:#111">销量</div><div class="a t " style="left:65px;top:192.0px;font-size:8px;letter-spacing:-0.2px;color:#111">信用</div><svg class="a" style="left:18.5px;top:206.5px" width="8" height="8" viewBox="0 0 8 8"><circle cx="4" cy="4" r="3.5" fill="#e8e8e8" stroke="#9a9a9a" stroke-width="0.8"/></svg><svg class="a" style="left:54px;top:206.5px" width="8" height="8" viewBox="0 0 8 8"><circle cx="4" cy="4" r="3.5" fill="#e8e8e8" stroke="#9a9a9a" stroke-width="0.8"/></svg><div class="a t " style="left:30px;top:206.5px;font-size:8px;letter-spacing:-0.2px;color:#111">价格↑</div><div class="a t " style="left:65px;top:206.5px;font-size:8px;letter-spacing:-0.2px;color:#111">价格↓</div><div class="a t " style="left:15.5px;top:227px;font-size:8px;letter-spacing:-0.2px;color:#111;background:#f0f0f0;padding:0 2px 0 1px;margin-left:-1px">限价区间</div><div class="a " style="left:15.3px;top:249px;width:22.7px;height:13.5px;background:#fff;border:1px solid #e4e4e4;box-sizing:border-box"></div><div class="a t " style="left:40px;top:252px;font-size:8px;letter-spacing:-0.2px;color:#111"><span class="m">---</span>元</div><div class="a " style="left:59px;top:249px;width:23.5px;height:13.5px;background:#fff;border:1px solid #e4e4e4;box-sizing:border-box"></div><div class="a t " style="left:85px;top:252px;font-size:8px;letter-spacing:-0.2px;color:#111">元</div><div class="a t " style="left:16px;top:276px;font-size:8px;letter-spacing:-0.2px;color:#111;background:#f0f0f0;padding:0 2px 0 1px;margin-left:-1px">搜索限制</div><div class="a " style="left:18.3px;top:291.7px;width:23px;height:13.3px;background:#fff;border:1px solid #e4e4e4;box-sizing:border-box"></div><div class="a t " style="left:20px;top:294px;font-size:8px;letter-spacing:-0.2px;color:#111"><span class="m">5</span></div><div class="a t " style="left:49px;top:294px;font-size:8px;letter-spacing:-0.2px;color:#111">页以内</div><div class="a t " style="left:16.5px;top:318px;font-size:8px;letter-spacing:-0.2px;color:#111;background:#f0f0f0;padding:0 2px 0 1px;margin-left:-1px">软件授权</div><div class="a t " style="left:15.3px;top:334px;font-size:8px;letter-spacing:-0.2px;color:#111">当前授权版本：免费</div><div class="a t " style="left:15.3px;top:349px;font-size:8px;letter-spacing:-0.2px;color:#111">授权方：图老弟软件</div><div class="a t " style="left:15.3px;top:364px;font-size:8px;letter-spacing:-0.2px;color:#111"><span class="m">QQ</span>群：</div><div class="a t " style="left:38px;top:364px;font-size:8px;letter-spacing:-0.2px;color:#2a2ab8;text-decoration:underline"><span class="m">339478282</span></div><div class="a t " style="left:15.3px;top:377.5px;font-size:8px;letter-spacing:-0.2px;color:#111">作者<span class="m">QQ</span>：</div><svg class="a" style="left:48px;top:376px" width="11" height="12" viewBox="0 0 11 12"><ellipse cx="5.5" cy="5" rx="3.6" ry="4.3" fill="#111"/><ellipse cx="5.5" cy="6.5" rx="2.4" ry="2.8" fill="#fff"/><path d="M3 4.5 L8 4.5 L5.5 6Z" fill="#f0a020"/><path d="M2 8 Q5.5 10.5 9 8 L9 9.5 Q5.5 11.5 2 9.5Z" fill="#e02020"/><ellipse cx="3" cy="11" rx="2" ry="0.9" fill="#f0a020"/><ellipse cx="8" cy="11" rx="2" ry="0.9" fill="#f0a020"/></svg><div class="a " style="left:59px;top:377px;width:29px;height:9px;background:linear-gradient(#f4f8fc,#dbe8f6);border:1px solid #6a98cc;border-radius:3px;box-sizing:border-box"></div><div class="a t " style="left:61.5px;top:377.5px;font-size:7.3px;color:#2244aa"><span class="m">QQ</span>交谈</div><div class="a t " style="left:15.5px;top:391.5px;font-size:8px;letter-spacing:-0.2px;color:#111">其他软件：</div><div class="a t " style="left:16.3px;top:402.5px;font-size:8px;letter-spacing:-0.2px;color:#d01828;-webkit-text-stroke-width:0.3px">图老弟淘图助手</div><div class="a t " style="left:16.3px;top:412.2px;font-size:8px;letter-spacing:-0.2px;color:#d01828;-webkit-text-stroke-width:0.3px">支持阿里软件、京东、</div><div class="a t " style="left:16.3px;top:421.9px;font-size:8px;letter-spacing:-0.2px;color:#d01828;-webkit-text-stroke-width:0.3px">苏宁、<span class="m">1</span>号店、唯品会</div><div class="a t " style="left:16.3px;top:431.6px;font-size:8px;letter-spacing:-0.2px;color:#d01828;-webkit-text-stroke-width:0.3px">等店铺图片一键下载</div><div class="a t " style="left:18.7px;top:451.5px;font-size:8px;letter-spacing:-0.2px;color:#2a2ab8;text-decoration:underline">微软插件：<span class="m">.net4.5</span></div><div class="a t " style="left:18.7px;top:461.5px;font-size:8px;letter-spacing:-0.2px;color:#111">官方网站：</div><div class="a t " style="left:18.7px;top:472px;font-size:8px;letter-spacing:-0.2px;color:#2a2ab8;text-decoration:underline"><span class="m">www.tulaodi.com</span></div><div class="a " style="left:9px;top:490.5px;width:95px;height:1.5px;background:#cfcfcf"></div><div class="a " style="left:105px;top:28.5px;width:81.5px;height:64.5px;border:1px solid #e2e4e6;border-radius:2px;box-sizing:border-box"></div><div class="a t " style="left:107.5px;top:23.5px;font-size:8px;color:#1a1a1a;background:#f0f0f0;padding:0 1px">掌柜<span class="m">id</span></div><div class="a " style="left:107.8px;top:38px;width:71px;height:51.4px;background:#fff;border:1px solid;border-color:#6a6a6a #d0d0d0 #d0d0d0 #6a6a6a;box-sizing:border-box;overflow:hidden"><div class="a t" style="left:1.5px;top:-3.0px;font-size:8px;letter-spacing:-0.2px;color:#111">飞杨<span class="m">20008</span></div><div class="a t" style="left:1.5px;top:9.0px;font-size:8px;letter-spacing:-0.2px;color:#111">情趣宫殿</div><div class="a t" style="left:1.5px;top:19.5px;font-size:8px;letter-spacing:-0.2px;color:#111">一购办公用品专</div><div class="a t" style="left:1.5px;top:30.0px;font-size:8px;letter-spacing:-0.2px;color:#111">营店</div><div class="a t" style="left:1.5px;top:40.5px;font-size:8px;letter-spacing:-0.2px;color:#111"><span class="m">maggie880324</span></div></div><div class="a " style="left:168.5px;top:39.6px;width:9.3px;height:48.8px;background:#f0f0f0;border-left:1px solid #e0e0e0"></div><div class="a " style="left:169px;top:57.7px;width:8.5px;height:19.7px;background:linear-gradient(to right,#e8e8e8,#d8d8d8);border:1px solid #a0a0a0;border-radius:2px;box-sizing:border-box"></div><svg class="a" style="left:170.5px;top:42px" width="5" height="3"><path d="M0 3H5L2.5 0Z" fill="#333"/></svg><svg class="a" style="left:170.5px;top:83px" width="5" height="3"><path d="M0 0H5L2.5 3Z" fill="#333"/></svg><div class="a " style="left:171px;top:65px;width:4px;height:0.8px;background:#666"></div><div class="a " style="left:171px;top:67px;width:4px;height:0.8px;background:#666"></div><div class="a " style="left:171px;top:69px;width:4px;height:0.8px;background:#666"></div><div class="a " style="left:190px;top:28.5px;width:87px;height:65.2px;border:1px solid #e2e4e6;border-radius:2px;box-sizing:border-box"></div><div class="a t " style="left:192.5px;top:24px;font-size:8px;color:#1a1a1a;background:#f0f0f0;padding:0 1px">关键字</div><div class="a " style="left:192px;top:38.5px;width:81.3px;height:52.5px;background:#fff;border:1px solid;border-color:#6a6a6a #d0d0d0 #d0d0d0 #6a6a6a;box-sizing:border-box"></div><div class="a t " style="left:193px;top:40.5px;font-size:8px;letter-spacing:-0.2px;color:#111">色笔</div><div class="a t " style="left:193px;top:51.0px;font-size:8px;letter-spacing:-0.2px;color:#111">儿童<span class="m">&nbsp;</span>衣服</div><div class="a t " style="left:193px;top:61.5px;font-size:8px;letter-spacing:-0.2px;color:#111">条形码</div><div class="a t " style="left:193px;top:72.0px;font-size:8px;letter-spacing:-0.2px;color:#111">成人玩具</div><div class="a " style="left:285px;top:31px;width:43.3px;height:16.5px;border:1px solid #707070;border-radius:2.5px;box-sizing:border-box;background:linear-gradient(to bottom,#f4f4f4 0%,#ebebeb 48%,#dcdcdc 52%,#cfcfcf 100%);box-shadow:inset 0 0 0 1px rgba(255,255,255,0.7);display:flex;align-items:center;justify-content:center;font-size:8px;letter-spacing:-0.2px;color:#111">开始查询</div><div class="a " style="left:285px;top:53.5px;width:43.3px;height:16.7px;border:1px solid #707070;border-radius:2.5px;box-sizing:border-box;background:linear-gradient(to bottom,#f4f4f4 0%,#ebebeb 48%,#dcdcdc 52%,#cfcfcf 100%);box-shadow:inset 0 0 0 1px rgba(255,255,255,0.7);display:flex;align-items:center;justify-content:center;font-size:8px;letter-spacing:-0.2px;color:#111">反馈信息</div><div class="a " style="left:285px;top:75.5px;width:43.3px;height:16.8px;border:1px solid #707070;border-radius:2.5px;box-sizing:border-box;background:linear-gradient(to bottom,#f4f4f4 0%,#ebebeb 48%,#dcdcdc 52%,#cfcfcf 100%);box-shadow:inset 0 0 0 1px rgba(255,255,255,0.7);display:flex;align-items:center;justify-content:center;font-size:8px;letter-spacing:-0.2px;color:#111">关于我们</div><div class="a " style="left:332px;top:21.3px;width:254px;height:72.7px;background:#fff"></div><div class="a t " style="left:340.4px;top:30.2px;font-size:11px;letter-spacing:-0.5px;color:#333;line-height:12px;-webkit-text-stroke-width:0">图老弟软件欢迎您<span class="m">!</span></div><div class="a t " style="left:340.4px;top:41.5px;font-size:11px;letter-spacing:-0.5px;color:#333;line-height:12px;-webkit-text-stroke-width:0">多个关键词换行即可</div><div class="a t " style="left:340.4px;top:52.8px;font-size:11px;letter-spacing:-0.5px;color:#333;line-height:12px;-webkit-text-stroke-width:0">多个掌柜<span class="m">id</span>换行即可</div><div class="a " style="left:109px;top:101px;width:476.7px;height:7px;border-radius:3.5px;background:linear-gradient(to bottom,#d8f8d8 0%,#a8eca8 30%,#22cc33 55%,#08b018 100%);box-shadow:inset 0 0 0 0.6px rgba(0,90,0,0.35)"></div><div class="a " style="left:105px;top:110.5px;width:482.5px;height:379.3px;background:#ababab;border:1px solid #4c4c4c;border-right-color:#303030;border-bottom-color:#303030;box-sizing:border-box"></div><div class="a " style="left:106px;top:111.5px;width:469.7px;height:20.6px;background:linear-gradient(to bottom,#fdfdfd,#f3f3f3)"></div><div class="a " style="left:106px;top:131.6px;width:469.7px;height:1.6px;background:#d4d4d4"></div><div class="a " style="left:132.2px;top:111.5px;width:1px;height:20.6px;background:#dedede"></div><div class="a " style="left:157.8px;top:111.5px;width:1px;height:20.6px;background:#dedede"></div><div class="a " style="left:223.5px;top:111.5px;width:1px;height:20.6px;background:#dedede"></div><div class="a " style="left:410.2px;top:111.5px;width:1px;height:20.6px;background:#dedede"></div><div class="a " style="left:448.8px;top:111.5px;width:1px;height:20.6px;background:#dedede"></div><div class="a " style="left:548.5px;top:111.5px;width:1px;height:20.6px;background:#dedede"></div><div class="a t " style="left:136px;top:117.5px;font-size:8px;letter-spacing:-0.2px;color:#111">排序</div><div class="a t " style="left:162px;top:117.5px;font-size:8px;letter-spacing:-0.2px;color:#111">掌柜<span class="m">id</span></div><div class="a t " style="left:228.3px;top:117.5px;font-size:8px;letter-spacing:-0.2px;color:#111">标题</div><div class="a t " style="left:414px;top:117.5px;font-size:8px;letter-spacing:-0.2px;color:#111">价格</div><div class="a t " style="left:453px;top:117.5px;font-size:8px;letter-spacing:-0.2px;color:#111">所在位置</div><div class="a t " style="left:552.7px;top:117.5px;font-size:8px;letter-spacing:-0.2px;color:#111">帮助</div><div class="a " style="left:106px;top:132.4px;width:26.7px;height:15.14px;background:#f4f4f4"></div><div class="a " style="left:132.7px;top:132.4px;width:443px;height:15.14px;background:#fff"></div><div class="a " style="left:106px;top:146.54000000000002px;width:469.7px;height:1px;background:#d8d8d8"></div><div class="a " style="left:132.2px;top:132.4px;width:1px;height:15.14px;background:#c8c8c8"></div><div class="a " style="left:157.8px;top:132.4px;width:1px;height:15.14px;background:#c8c8c8"></div><div class="a " style="left:223.5px;top:132.4px;width:1px;height:15.14px;background:#c8c8c8"></div><div class="a " style="left:410.2px;top:132.4px;width:1px;height:15.14px;background:#c8c8c8"></div><div class="a " style="left:448.8px;top:132.4px;width:1px;height:15.14px;background:#c8c8c8"></div><div class="a " style="left:548.5px;top:132.4px;width:1px;height:15.14px;background:#c8c8c8"></div><div class="a t " style="left:134.2px;top:136.0px;font-size:8px;letter-spacing:-0.2px;color:#111"><span class="m">1</span></div><div class="a t " style="left:160px;top:136.0px;font-size:8px;letter-spacing:-0.2px;color:#111"><span class="m">115658250672</span></div><div class="a t " style="left:226px;top:136.0px;font-size:8px;letter-spacing:-0.2px;color:#111"><span class="m">MARCO</span>马可<span class="m">6100-24&nbsp;36&nbsp;48</span>色原木彩色铅笔环保纸<span class="m">...</span></div><div class="a t " style="left:412.5px;top:136.0px;font-size:8px;letter-spacing:-0.2px;color:#111"><span class="m">17.90</span></div><div class="a t " style="left:451px;top:136.0px;font-size:8px;letter-spacing:-0.2px;color:#111">第<span class="m">1</span>页<span class="m">;</span>第<span class="m">10</span>个</div><div class="a t " style="left:551px;top:136.0px;font-size:8px;letter-spacing:-0.2px;color:#1c1cc0">查看</div><div class="a " style="left:106px;top:147.54000000000002px;width:26.7px;height:15.14px;background:#f4f4f4"></div><div class="a " style="left:132.7px;top:147.54000000000002px;width:443px;height:15.14px;background:#fff"></div><div class="a " style="left:106px;top:161.68px;width:469.7px;height:1px;background:#d8d8d8"></div><div class="a " style="left:132.2px;top:147.54000000000002px;width:1px;height:15.14px;background:#c8c8c8"></div><div class="a " style="left:157.8px;top:147.54000000000002px;width:1px;height:15.14px;background:#c8c8c8"></div><div class="a " style="left:223.5px;top:147.54000000000002px;width:1px;height:15.14px;background:#c8c8c8"></div><div class="a " style="left:410.2px;top:147.54000000000002px;width:1px;height:15.14px;background:#c8c8c8"></div><div class="a " style="left:448.8px;top:147.54000000000002px;width:1px;height:15.14px;background:#c8c8c8"></div><div class="a " style="left:548.5px;top:147.54000000000002px;width:1px;height:15.14px;background:#c8c8c8"></div><div class="a t " style="left:134.2px;top:151.14000000000001px;font-size:8px;letter-spacing:-0.2px;color:#111"><span class="m">2</span></div><div class="a t " style="left:160px;top:151.14000000000001px;font-size:8px;letter-spacing:-0.2px;color:#111"><span class="m">115658250672</span></div><div class="a t " style="left:226px;top:151.14000000000001px;font-size:8px;letter-spacing:-0.2px;color:#111">包邮<span class="m">MARCO</span>马可超顺滑儿童彩铅<span class="m">&nbsp;</span>学生涂鸦彩色铅<span class="m">...</span></div><div class="a t " style="left:412.5px;top:151.14000000000001px;font-size:8px;letter-spacing:-0.2px;color:#111"><span class="m">10.00</span></div><div class="a t " style="left:451px;top:151.14000000000001px;font-size:8px;letter-spacing:-0.2px;color:#111">第<span class="m">1</span>页<span class="m">;</span>第<span class="m">26</span>个</div><div class="a t " style="left:551px;top:151.14000000000001px;font-size:8px;letter-spacing:-0.2px;color:#1c1cc0">查看</div><div class="a " style="left:106px;top:162.68px;width:26.7px;height:15.14px;background:#f4f4f4"></div><div class="a " style="left:132.7px;top:162.68px;width:443px;height:15.14px;background:#fff"></div><div class="a " style="left:106px;top:176.82px;width:469.7px;height:1px;background:#d8d8d8"></div><div class="a " style="left:132.2px;top:162.68px;width:1px;height:15.14px;background:#c8c8c8"></div><div class="a " style="left:157.8px;top:162.68px;width:1px;height:15.14px;background:#c8c8c8"></div><div class="a " style="left:223.5px;top:162.68px;width:1px;height:15.14px;background:#c8c8c8"></div><div class="a " style="left:410.2px;top:162.68px;width:1px;height:15.14px;background:#c8c8c8"></div><div class="a " style="left:448.8px;top:162.68px;width:1px;height:15.14px;background:#c8c8c8"></div><div class="a " style="left:548.5px;top:162.68px;width:1px;height:15.14px;background:#c8c8c8"></div><div class="a t " style="left:134.2px;top:166.28px;font-size:8px;letter-spacing:-0.2px;color:#111"><span class="m">3</span></div><div class="a t " style="left:160px;top:166.28px;font-size:8px;letter-spacing:-0.2px;color:#111"><span class="m">115658250672</span></div><div class="a t " style="left:226px;top:166.28px;font-size:8px;letter-spacing:-0.2px;color:#111">马可雷诺阿<span class="m">3100</span>大师级油性彩色铅笔<span class="m">&nbsp;</span>绘画<span class="m">36</span>色<span class="m">&nbsp;...</span></div><div class="a t " style="left:412.5px;top:166.28px;font-size:8px;letter-spacing:-0.2px;color:#111"><span class="m">50.90</span></div><div class="a t " style="left:451px;top:166.28px;font-size:8px;letter-spacing:-0.2px;color:#111">第<span class="m">2</span>页<span class="m">;</span>第<span class="m">12</span>个</div><div class="a t " style="left:551px;top:166.28px;font-size:8px;letter-spacing:-0.2px;color:#1c1cc0">查看</div><div class="a " style="left:106px;top:177.82px;width:26.7px;height:15.14px;background:#f4f4f4"></div><div class="a " style="left:132.7px;top:177.82px;width:443px;height:15.14px;background:#fff"></div><div class="a " style="left:106px;top:191.95999999999998px;width:469.7px;height:1px;background:#d8d8d8"></div><div class="a " style="left:132.2px;top:177.82px;width:1px;height:15.14px;background:#c8c8c8"></div><div class="a " style="left:157.8px;top:177.82px;width:1px;height:15.14px;background:#c8c8c8"></div><div class="a " style="left:223.5px;top:177.82px;width:1px;height:15.14px;background:#c8c8c8"></div><div class="a " style="left:410.2px;top:177.82px;width:1px;height:15.14px;background:#c8c8c8"></div><div class="a " style="left:448.8px;top:177.82px;width:1px;height:15.14px;background:#c8c8c8"></div><div class="a " style="left:548.5px;top:177.82px;width:1px;height:15.14px;background:#c8c8c8"></div><div class="a t " style="left:134.2px;top:181.42px;font-size:8px;letter-spacing:-0.2px;color:#111"><span class="m">4</span></div><div class="a t " style="left:160px;top:181.42px;font-size:8px;letter-spacing:-0.2px;color:#111">一购办公用品<span class="m">...</span></div><div class="a t " style="left:226px;top:181.42px;font-size:8px;letter-spacing:-0.2px;color:#111">真彩四叶草<span class="m">12&nbsp;18&nbsp;24&nbsp;36</span>色水彩笔无毒可水洗易<span class="m">...</span></div><div class="a t " style="left:412.5px;top:181.42px;font-size:8px;letter-spacing:-0.2px;color:#111"><span class="m">5.00</span></div><div class="a t " style="left:451px;top:181.42px;font-size:8px;letter-spacing:-0.2px;color:#111">第<span class="m">3</span>页<span class="m">;</span>第<span class="m">11</span>个</div><div class="a t " style="left:551px;top:181.42px;font-size:8px;letter-spacing:-0.2px;color:#1c1cc0">查看</div><div class="a " style="left:106px;top:192.96px;width:26.7px;height:15.14px;background:#f4f4f4"></div><div class="a " style="left:132.7px;top:192.96px;width:443px;height:15.14px;background:#fff"></div><div class="a " style="left:106px;top:207.10000000000002px;width:469.7px;height:1px;background:#d8d8d8"></div><div class="a " style="left:132.2px;top:192.96px;width:1px;height:15.14px;background:#c8c8c8"></div><div class="a " style="left:157.8px;top:192.96px;width:1px;height:15.14px;background:#c8c8c8"></div><div class="a " style="left:223.5px;top:192.96px;width:1px;height:15.14px;background:#c8c8c8"></div><div class="a " style="left:410.2px;top:192.96px;width:1px;height:15.14px;background:#c8c8c8"></div><div class="a " style="left:448.8px;top:192.96px;width:1px;height:15.14px;background:#c8c8c8"></div><div class="a " style="left:548.5px;top:192.96px;width:1px;height:15.14px;background:#c8c8c8"></div><div class="a t " style="left:134.2px;top:196.56px;font-size:8px;letter-spacing:-0.2px;color:#111"><span class="m">5</span></div><div class="a t " style="left:160px;top:196.56px;font-size:8px;letter-spacing:-0.2px;color:#111"><span class="m">maggie880324</span></div><div class="a t " style="left:226px;top:196.56px;font-size:8px;letter-spacing:-0.2px;color:#111">女童两件套<span class="m">0-1-2-3</span>岁半宝宝秋装<span class="m">6</span>个月童装儿童<span class="m">...</span></div><div class="a t " style="left:412.5px;top:196.56px;font-size:8px;letter-spacing:-0.2px;color:#111"><span class="m">39.90</span></div><div class="a t " style="left:451px;top:196.56px;font-size:8px;letter-spacing:-0.2px;color:#111">第<span class="m">5</span>页<span class="m">;</span>第<span class="m">3</span>个</div><div class="a t " style="left:551px;top:196.56px;font-size:8px;letter-spacing:-0.2px;color:#1c1cc0">查看</div><div class="a " style="left:106px;top:208.10000000000002px;width:26.7px;height:15.14px;background:#f4f4f4"></div><div class="a " style="left:132.7px;top:208.10000000000002px;width:443px;height:15.14px;background:#fff"></div><div class="a " style="left:106px;top:222.24px;width:469.7px;height:1px;background:#d8d8d8"></div><div class="a " style="left:132.2px;top:208.10000000000002px;width:1px;height:15.14px;background:#c8c8c8"></div><div class="a " style="left:157.8px;top:208.10000000000002px;width:1px;height:15.14px;background:#c8c8c8"></div><div class="a " style="left:223.5px;top:208.10000000000002px;width:1px;height:15.14px;background:#c8c8c8"></div><div class="a " style="left:410.2px;top:208.10000000000002px;width:1px;height:15.14px;background:#c8c8c8"></div><div class="a " style="left:448.8px;top:208.10000000000002px;width:1px;height:15.14px;background:#c8c8c8"></div><div class="a " style="left:548.5px;top:208.10000000000002px;width:1px;height:15.14px;background:#c8c8c8"></div><div class="a t " style="left:134.2px;top:211.70000000000002px;font-size:8px;letter-spacing:-0.2px;color:#111"><span class="m">6</span></div><div class="a t " style="left:160px;top:211.70000000000002px;font-size:8px;letter-spacing:-0.2px;color:#111"><span class="m">maggie880324</span></div><div class="a t " style="left:226px;top:211.70000000000002px;font-size:8px;letter-spacing:-0.2px;color:#111"><span class="m">2015</span>女童春秋套装<span class="m">0-1</span>岁<span class="m">2-3</span>婴儿衣服<span class="m">7</span>儿童外套<span class="m">6...</span></div><div class="a t " style="left:412.5px;top:211.70000000000002px;font-size:8px;letter-spacing:-0.2px;color:#111"><span class="m">45.00</span></div><div class="a t " style="left:451px;top:211.70000000000002px;font-size:8px;letter-spacing:-0.2px;color:#111">第<span class="m">5</span>页<span class="m">;</span>第<span class="m">4</span>个</div><div class="a t " style="left:551px;top:211.70000000000002px;font-size:8px;letter-spacing:-0.2px;color:#1c1cc0">查看</div><div class="a " style="left:106px;top:223.24px;width:26.7px;height:15.14px;background:#f4f4f4"></div><div class="a " style="left:132.7px;top:223.24px;width:443px;height:15.14px;background:#fff"></div><div class="a " style="left:106px;top:237.38px;width:469.7px;height:1px;background:#d8d8d8"></div><div class="a " style="left:132.2px;top:223.24px;width:1px;height:15.14px;background:#c8c8c8"></div><div class="a " style="left:157.8px;top:223.24px;width:1px;height:15.14px;background:#c8c8c8"></div><div class="a " style="left:223.5px;top:223.24px;width:1px;height:15.14px;background:#c8c8c8"></div><div class="a " style="left:410.2px;top:223.24px;width:1px;height:15.14px;background:#c8c8c8"></div><div class="a " style="left:448.8px;top:223.24px;width:1px;height:15.14px;background:#c8c8c8"></div><div class="a " style="left:548.5px;top:223.24px;width:1px;height:15.14px;background:#c8c8c8"></div><div class="a t " style="left:134.2px;top:226.84px;font-size:8px;letter-spacing:-0.2px;color:#111"><span class="m">7</span></div><div class="a t " style="left:160px;top:226.84px;font-size:8px;letter-spacing:-0.2px;color:#111">飞杨<span class="m">20008</span></div><div class="a t " style="left:226px;top:226.84px;font-size:8px;letter-spacing:-0.2px;color:#111">减压神器特价纸质升级版白卡成人<span class="m">1000</span>片拼图益<span class="m">...</span></div><div class="a t " style="left:412.5px;top:226.84px;font-size:8px;letter-spacing:-0.2px;color:#111"><span class="m">25.80</span></div><div class="a t " style="left:451px;top:226.84px;font-size:8px;letter-spacing:-0.2px;color:#111">第<span class="m">1</span>页<span class="m">;</span>第<span class="m">14</span>个</div><div class="a t " style="left:551px;top:226.84px;font-size:8px;letter-spacing:-0.2px;color:#1c1cc0">查看</div><div class="a " style="left:106px;top:238.38px;width:26.7px;height:15.14px;background:#f4f4f4"></div><div class="a " style="left:132.7px;top:238.38px;width:443px;height:15.14px;background:#fff"></div><div class="a " style="left:106px;top:252.51999999999998px;width:469.7px;height:1px;background:#d8d8d8"></div><div class="a " style="left:132.2px;top:238.38px;width:1px;height:15.14px;background:#c8c8c8"></div><div class="a " style="left:157.8px;top:238.38px;width:1px;height:15.14px;background:#c8c8c8"></div><div class="a " style="left:223.5px;top:238.38px;width:1px;height:15.14px;background:#c8c8c8"></div><div class="a " style="left:410.2px;top:238.38px;width:1px;height:15.14px;background:#c8c8c8"></div><div class="a " style="left:448.8px;top:238.38px;width:1px;height:15.14px;background:#c8c8c8"></div><div class="a " style="left:548.5px;top:238.38px;width:1px;height:15.14px;background:#c8c8c8"></div><div class="a t " style="left:134.2px;top:241.98px;font-size:8px;letter-spacing:-0.2px;color:#111"><span class="m">8</span></div><div class="a t " style="left:160px;top:241.98px;font-size:8px;letter-spacing:-0.2px;color:#111">飞杨<span class="m">20008</span></div><div class="a t " style="left:226px;top:241.98px;font-size:8px;letter-spacing:-0.2px;color:#111">御工坊木质<span class="m">500</span>片<span class="m">/1000</span>片拼图汽水罐易拉罐可乐<span class="m">...</span></div><div class="a t " style="left:412.5px;top:241.98px;font-size:8px;letter-spacing:-0.2px;color:#111"><span class="m">58.00</span></div><div class="a t " style="left:451px;top:241.98px;font-size:8px;letter-spacing:-0.2px;color:#111">第<span class="m">5</span>页<span class="m">;</span>第<span class="m">14</span>个</div><div class="a " style="left:549px;top:238.38px;width:26.7px;height:14.14px;background:#3399ff"></div><div class="a t " style="left:551px;top:241.98px;font-size:8px;letter-spacing:-0.2px;color:#f0f8ff">查看</div><div class="a " style="left:106px;top:253.52px;width:26.7px;height:15.14px;background:#f4f4f4"></div><div class="a " style="left:132.7px;top:253.52px;width:443px;height:15.14px;background:#fff"></div><div class="a " style="left:106px;top:267.66px;width:469.7px;height:1px;background:#d8d8d8"></div><div class="a " style="left:132.2px;top:253.52px;width:1px;height:15.14px;background:#c8c8c8"></div><div class="a " style="left:157.8px;top:253.52px;width:1px;height:15.14px;background:#c8c8c8"></div><div class="a " style="left:223.5px;top:253.52px;width:1px;height:15.14px;background:#c8c8c8"></div><div class="a " style="left:410.2px;top:253.52px;width:1px;height:15.14px;background:#c8c8c8"></div><div class="a " style="left:448.8px;top:253.52px;width:1px;height:15.14px;background:#c8c8c8"></div><div class="a " style="left:548.5px;top:253.52px;width:1px;height:15.14px;background:#c8c8c8"></div><div class="a t " style="left:134.2px;top:257.12px;font-size:8px;letter-spacing:-0.2px;color:#111"><span class="m">9</span></div><div class="a t " style="left:160px;top:257.12px;font-size:8px;letter-spacing:-0.2px;color:#111">情趣宫殿</div><div class="a t " style="left:226px;top:257.12px;font-size:8px;letter-spacing:-0.2px;color:#111">男女用情趣<span class="m">sm</span>另类玩具成人用品警察不锈钢合金<span class="m">...</span></div><div class="a t " style="left:412.5px;top:257.12px;font-size:8px;letter-spacing:-0.2px;color:#111"><span class="m">33.95</span></div><div class="a t " style="left:451px;top:257.12px;font-size:8px;letter-spacing:-0.2px;color:#111">第<span class="m">5</span>页<span class="m">;</span>第<span class="m">44</span>个</div><div class="a t " style="left:551px;top:257.12px;font-size:8px;letter-spacing:-0.2px;color:#1c1cc0">查看</div><div class="a " style="left:106px;top:268.65999999999997px;width:26.7px;height:15.14px;background:#f4f4f4"></div><div class="a " style="left:132.7px;top:268.65999999999997px;width:443px;height:15.14px;background:#fff"></div><div class="a " style="left:106px;top:282.79999999999995px;width:469.7px;height:1px;background:#d8d8d8"></div><div class="a " style="left:132.2px;top:268.65999999999997px;width:1px;height:15.14px;background:#c8c8c8"></div><div class="a " style="left:157.8px;top:268.65999999999997px;width:1px;height:15.14px;background:#c8c8c8"></div><div class="a " style="left:223.5px;top:268.65999999999997px;width:1px;height:15.14px;background:#c8c8c8"></div><div class="a " style="left:410.2px;top:268.65999999999997px;width:1px;height:15.14px;background:#c8c8c8"></div><div class="a " style="left:448.8px;top:268.65999999999997px;width:1px;height:15.14px;background:#c8c8c8"></div><div class="a " style="left:548.5px;top:268.65999999999997px;width:1px;height:15.14px;background:#c8c8c8"></div><div class="a " style="left:575.7px;top:111.5px;width:10.8px;height:377.3px;background:#ababab"></div><svg class="a" style="left:110px;top:242.88px" width="5" height="6"><path d="M0 0L4 3L0 6Z" fill="#111"/></svg><div class="a " style="left:111.8px;top:274.96px;width:2.6px;height:2.6px;background:#222;border-radius:50%"></div><div class="a " style="left:217px;top:294px;width:204px;height:168.5px;border:1px solid #5a6a7c;border-radius:5px;box-sizing:border-box;filter:drop-shadow(0 2px 3px rgba(0,0,0,0.25));background:linear-gradient(to bottom,#d6e2ee 0%,#cad9e8 20%,#bfd1e3 100%);box-shadow:inset 0 0 0 1px rgba(255,255,255,0.55)"></div><svg class="a" style="left:223px;top:299px" width="11" height="11" viewBox="0 0 12 12"><circle cx="5" cy="5" r="3.3" fill="#e6f2fa" stroke="#8a9aa8" stroke-width="1.2"/><circle cx="4.2" cy="4.2" r="1.2" fill="#fff"/><line x1="7.3" y1="7.3" x2="10.5" y2="10.5" stroke="#3a4a5a" stroke-width="1.6"/></svg><div class="a t " style="left:237px;top:300px;font-size:8px;letter-spacing:-0.2px;color:#1a1a1a">选择操作：</div><div class="a " style="left:348px;top:294.5px;width:69px;height:13px;border:1px solid rgba(30,60,90,0.30);border-top:none;border-radius:0 0 4px 4px;box-sizing:border-box;box-shadow:inset 0 -1px 0 rgba(255,255,255,0.25);background:rgba(255,255,255,0.12)"></div><div class="a " style="left:367.7px;top:294.5px;width:1px;height:12px;background:rgba(30,60,90,0.22)"></div><div class="a " style="left:385px;top:294.5px;width:1px;height:12px;background:rgba(30,60,90,0.22)"></div><div class="a " style="left:354.3px;top:301.3px;width:8px;height:2.8px;background:#fff;border:1px solid #3a4a5a;border-radius:1.5px;box-sizing:border-box"></div><div class="a " style="left:372.3px;top:298px;width:7.4px;height:6.4px;border:1px solid #3a4a5a;border-radius:1.5px;box-sizing:border-box;background:#5a6470;box-shadow:inset 0 0 0 1px #fff,inset 0 1.5px 0 1px #fff"></div><svg class="a" style="left:397px;top:297.3px;overflow:visible" width="8" height="7.6" viewBox="0 0 8 7.6"><path d="M1.8 1.8 L6.2 5.8 M6.2 1.8 L1.8 5.8" stroke="#3a4a5a" stroke-width="3.2" stroke-linecap="round" opacity="0.85"/><path d="M1.8 1.8 L6.2 5.8 M6.2 1.8 L1.8 5.8" stroke="#fff" stroke-width="1.5" stroke-linecap="round"/></svg><div class="a " style="left:222px;top:313.5px;width:194.3px;height:145px;background:#f0f0f0;border:1px solid #98a4b0;box-sizing:border-box"></div><div class="a " style="left:226px;top:321.5px;width:189.4px;height:92px;background:#fff"></div><svg class="a" style="left:228.5px;top:334px" width="77" height="77.3" viewBox="0 0 77 77.3"><rect width="77" height="77.3" fill="#151010"/><rect x="0" y="11.30" width="77" height="1.7" fill="#b88850"/><rect x="1.10" y="1.40" width="6.9" height="9.9" rx="1.2" fill="#e8b030"/><rect x="1.50" y="3.80" width="6.1" height="3.6" fill="#d06030"/><rect x="2.10" y="7.80" width="4.8" height="2.2" fill="#c0c0c8" opacity="0.8"/><rect x="2.30" y="1.60" width="1.3" height="8.8" fill="#fff" opacity="0.35"/><rect x="9.55" y="1.40" width="6.9" height="9.9" rx="1.2" fill="#d83060"/><rect x="9.95" y="3.80" width="6.1" height="3.6" fill="#e0a0c0"/><rect x="10.55" y="7.80" width="4.8" height="2.2" fill="#c0c0c8" opacity="0.8"/><rect x="10.75" y="1.60" width="1.3" height="8.8" fill="#fff" opacity="0.35"/><rect x="18.00" y="1.40" width="6.9" height="9.9" rx="1.2" fill="#f0f0f0"/><rect x="18.40" y="3.80" width="6.1" height="3.6" fill="#c03040"/><rect x="19.00" y="7.80" width="4.8" height="2.2" fill="#c0c0c8" opacity="0.8"/><rect x="19.20" y="1.60" width="1.3" height="8.8" fill="#fff" opacity="0.35"/><rect x="26.45" y="1.40" width="6.9" height="9.9" rx="1.2" fill="#a070b0"/><rect x="26.85" y="3.80" width="6.1" height="3.6" fill="#e0c040"/><rect x="27.45" y="7.80" width="4.8" height="2.2" fill="#3060b0" opacity="0.8"/><rect x="27.65" y="1.60" width="1.3" height="8.8" fill="#fff" opacity="0.35"/><rect x="34.90" y="1.40" width="6.9" height="9.9" rx="1.2" fill="#e8c830"/><rect x="35.30" y="3.80" width="6.1" height="3.6" fill="#c09030"/><rect x="35.90" y="7.80" width="4.8" height="2.2" fill="#d04040" opacity="0.8"/><rect x="36.10" y="1.60" width="1.3" height="8.8" fill="#fff" opacity="0.35"/><rect x="43.35" y="1.40" width="6.9" height="9.9" rx="1.2" fill="#30a060"/><rect x="43.75" y="3.80" width="6.1" height="3.6" fill="#e0e0a0"/><rect x="44.35" y="7.80" width="4.8" height="2.2" fill="#c0c0c8" opacity="0.8"/><rect x="44.55" y="1.60" width="1.3" height="8.8" fill="#fff" opacity="0.35"/><rect x="51.80" y="1.40" width="6.9" height="9.9" rx="1.2" fill="#f0a020"/><rect x="52.20" y="3.80" width="6.1" height="3.6" fill="#f0d040"/><rect x="52.80" y="7.80" width="4.8" height="2.2" fill="#d04040" opacity="0.8"/><rect x="53.00" y="1.60" width="1.3" height="8.8" fill="#fff" opacity="0.35"/><rect x="60.25" y="1.40" width="6.9" height="9.9" rx="1.2" fill="#e8e8e8"/><rect x="60.65" y="3.80" width="6.1" height="3.6" fill="#a0a0b0"/><rect x="61.25" y="7.80" width="4.8" height="2.2" fill="#e8d8a0" opacity="0.8"/><rect x="61.45" y="1.60" width="1.3" height="8.8" fill="#fff" opacity="0.35"/><rect x="68.70" y="1.40" width="6.9" height="9.9" rx="1.2" fill="#f0f0e0"/><rect x="69.10" y="3.80" width="6.1" height="3.6" fill="#d0c030"/><rect x="69.70" y="7.80" width="4.8" height="2.2" fill="#c0c0c8" opacity="0.8"/><rect x="69.90" y="1.60" width="1.3" height="8.8" fill="#fff" opacity="0.35"/><rect x="0" y="24.35" width="77" height="1.7" fill="#b88850"/><rect x="1.10" y="14.45" width="6.9" height="9.9" rx="1.2" fill="#d0b040"/><rect x="1.50" y="16.85" width="6.1" height="3.6" fill="#303020"/><rect x="2.10" y="20.85" width="4.8" height="2.2" fill="#f0c030" opacity="0.8"/><rect x="2.30" y="14.65" width="1.3" height="8.8" fill="#fff" opacity="0.35"/><rect x="9.55" y="14.45" width="6.9" height="9.9" rx="1.2" fill="#d03040"/><rect x="9.95" y="16.85" width="6.1" height="3.6" fill="#3060c0"/><rect x="10.55" y="20.85" width="4.8" height="2.2" fill="#d04040" opacity="0.8"/><rect x="10.75" y="14.65" width="1.3" height="8.8" fill="#fff" opacity="0.35"/><rect x="18.00" y="14.45" width="6.9" height="9.9" rx="1.2" fill="#306040"/><rect x="18.40" y="16.85" width="6.1" height="3.6" fill="#a0c060"/><rect x="19.00" y="20.85" width="4.8" height="2.2" fill="#e8d8a0" opacity="0.8"/><rect x="19.20" y="14.65" width="1.3" height="8.8" fill="#fff" opacity="0.35"/><rect x="26.45" y="14.45" width="6.9" height="9.9" rx="1.2" fill="#c070b0"/><rect x="26.85" y="16.85" width="6.1" height="3.6" fill="#8050a0"/><rect x="27.45" y="20.85" width="4.8" height="2.2" fill="#f4f0e8" opacity="0.8"/><rect x="27.65" y="14.65" width="1.3" height="8.8" fill="#fff" opacity="0.35"/><rect x="34.90" y="14.45" width="6.9" height="9.9" rx="1.2" fill="#3070c0"/><rect x="35.30" y="16.85" width="6.1" height="3.6" fill="#f0a030"/><rect x="35.90" y="20.85" width="4.8" height="2.2" fill="#ffffff" opacity="0.8"/><rect x="36.10" y="14.65" width="1.3" height="8.8" fill="#fff" opacity="0.35"/><rect x="43.35" y="14.45" width="6.9" height="9.9" rx="1.2" fill="#e8c040"/><rect x="43.75" y="16.85" width="6.1" height="3.6" fill="#e07030"/><rect x="44.35" y="20.85" width="4.8" height="2.2" fill="#c0c0c8" opacity="0.8"/><rect x="44.55" y="14.65" width="1.3" height="8.8" fill="#fff" opacity="0.35"/><rect x="51.80" y="14.45" width="6.9" height="9.9" rx="1.2" fill="#3080d0"/><rect x="52.20" y="16.85" width="6.1" height="3.6" fill="#f0f0f0"/><rect x="52.80" y="20.85" width="4.8" height="2.2" fill="#d04040" opacity="0.8"/><rect x="53.00" y="14.65" width="1.3" height="8.8" fill="#fff" opacity="0.35"/><rect x="60.25" y="14.45" width="6.9" height="9.9" rx="1.2" fill="#40a070"/><rect x="60.65" y="16.85" width="6.1" height="3.6" fill="#e8f0e8"/><rect x="61.25" y="20.85" width="4.8" height="2.2" fill="#f4f0e8" opacity="0.8"/><rect x="61.45" y="14.65" width="1.3" height="8.8" fill="#fff" opacity="0.35"/><rect x="68.70" y="14.45" width="6.9" height="9.9" rx="1.2" fill="#e070a0"/><rect x="69.10" y="16.85" width="6.1" height="3.6" fill="#d03050"/><rect x="69.70" y="20.85" width="4.8" height="2.2" fill="#e8d8a0" opacity="0.8"/><rect x="69.90" y="14.65" width="1.3" height="8.8" fill="#fff" opacity="0.35"/><rect x="0" y="37.40" width="77" height="1.7" fill="#b88850"/><rect x="1.10" y="27.50" width="6.9" height="9.9" rx="1.2" fill="#4080c0"/><rect x="1.50" y="29.90" width="6.1" height="3.6" fill="#e08030"/><rect x="2.10" y="33.90" width="4.8" height="2.2" fill="#f4f0e8" opacity="0.8"/><rect x="2.30" y="27.70" width="1.3" height="8.8" fill="#fff" opacity="0.35"/><rect x="9.55" y="27.50" width="6.9" height="9.9" rx="1.2" fill="#508060"/><rect x="9.95" y="29.90" width="6.1" height="3.6" fill="#f0f0f0"/><rect x="10.55" y="33.90" width="4.8" height="2.2" fill="#f4f0e8" opacity="0.8"/><rect x="10.75" y="27.70" width="1.3" height="8.8" fill="#fff" opacity="0.35"/><rect x="18.00" y="27.50" width="6.9" height="9.9" rx="1.2" fill="#e8c050"/><rect x="18.40" y="29.90" width="6.1" height="3.6" fill="#d08030"/><rect x="19.00" y="33.90" width="4.8" height="2.2" fill="#3060b0" opacity="0.8"/><rect x="19.20" y="27.70" width="1.3" height="8.8" fill="#fff" opacity="0.35"/><rect x="26.45" y="27.50" width="6.9" height="9.9" rx="1.2" fill="#d03040"/><rect x="26.85" y="29.90" width="6.1" height="3.6" fill="#f0e0e0"/><rect x="27.45" y="33.90" width="4.8" height="2.2" fill="#3060b0" opacity="0.8"/><rect x="27.65" y="27.70" width="1.3" height="8.8" fill="#fff" opacity="0.35"/><rect x="34.90" y="27.50" width="6.9" height="9.9" rx="1.2" fill="#e0e0e0"/><rect x="35.30" y="29.90" width="6.1" height="3.6" fill="#808090"/><rect x="35.90" y="33.90" width="4.8" height="2.2" fill="#f4f0e8" opacity="0.8"/><rect x="36.10" y="27.70" width="1.3" height="8.8" fill="#fff" opacity="0.35"/><rect x="43.35" y="27.50" width="6.9" height="9.9" rx="1.2" fill="#e8d8b0"/><rect x="43.75" y="29.90" width="6.1" height="3.6" fill="#c09060"/><rect x="44.35" y="33.90" width="4.8" height="2.2" fill="#c0c0c8" opacity="0.8"/><rect x="44.55" y="27.70" width="1.3" height="8.8" fill="#fff" opacity="0.35"/><rect x="51.80" y="27.50" width="6.9" height="9.9" rx="1.2" fill="#3070c0"/><rect x="52.20" y="29.90" width="6.1" height="3.6" fill="#f0f0f0"/><rect x="52.80" y="33.90" width="4.8" height="2.2" fill="#40a050" opacity="0.8"/><rect x="53.00" y="27.70" width="1.3" height="8.8" fill="#fff" opacity="0.35"/><rect x="60.25" y="27.50" width="6.9" height="9.9" rx="1.2" fill="#d03050"/><rect x="60.65" y="29.90" width="6.1" height="3.6" fill="#e090b0"/><rect x="61.25" y="33.90" width="4.8" height="2.2" fill="#c0c0c8" opacity="0.8"/><rect x="61.45" y="27.70" width="1.3" height="8.8" fill="#fff" opacity="0.35"/><rect x="68.70" y="27.50" width="6.9" height="9.9" rx="1.2" fill="#60a050"/><rect x="69.10" y="29.90" width="6.1" height="3.6" fill="#f0f0e0"/><rect x="69.70" y="33.90" width="4.8" height="2.2" fill="#3060b0" opacity="0.8"/><rect x="69.90" y="27.70" width="1.3" height="8.8" fill="#fff" opacity="0.35"/><rect x="0" y="50.45" width="77" height="1.7" fill="#b88850"/><rect x="1.10" y="40.55" width="6.9" height="9.9" rx="1.2" fill="#d83040"/><rect x="1.50" y="42.95" width="6.1" height="3.6" fill="#e080a0"/><rect x="2.10" y="46.95" width="4.8" height="2.2" fill="#3060b0" opacity="0.8"/><rect x="2.30" y="40.75" width="1.3" height="8.8" fill="#fff" opacity="0.35"/><rect x="9.55" y="40.55" width="6.9" height="9.9" rx="1.2" fill="#e0d040"/><rect x="9.95" y="42.95" width="6.1" height="3.6" fill="#70a050"/><rect x="10.55" y="46.95" width="4.8" height="2.2" fill="#f0c030" opacity="0.8"/><rect x="10.75" y="40.75" width="1.3" height="8.8" fill="#fff" opacity="0.35"/><rect x="18.00" y="40.55" width="6.9" height="9.9" rx="1.2" fill="#d03040"/><rect x="18.40" y="42.95" width="6.1" height="3.6" fill="#f0c0c0"/><rect x="19.00" y="46.95" width="4.8" height="2.2" fill="#c0c0c8" opacity="0.8"/><rect x="19.20" y="40.75" width="1.3" height="8.8" fill="#fff" opacity="0.35"/><rect x="26.45" y="40.55" width="6.9" height="9.9" rx="1.2" fill="#8050a0"/><rect x="26.85" y="42.95" width="6.1" height="3.6" fill="#c080c0"/><rect x="27.45" y="46.95" width="4.8" height="2.2" fill="#f4f0e8" opacity="0.8"/><rect x="27.65" y="40.75" width="1.3" height="8.8" fill="#fff" opacity="0.35"/><rect x="34.90" y="40.55" width="6.9" height="9.9" rx="1.2" fill="#304080"/><rect x="35.30" y="42.95" width="6.1" height="3.6" fill="#6080c0"/><rect x="35.90" y="46.95" width="4.8" height="2.2" fill="#e8d8a0" opacity="0.8"/><rect x="36.10" y="40.75" width="1.3" height="8.8" fill="#fff" opacity="0.35"/><rect x="43.35" y="40.55" width="6.9" height="9.9" rx="1.2" fill="#f0f0f0"/><rect x="43.75" y="42.95" width="6.1" height="3.6" fill="#3060b0"/><rect x="44.35" y="46.95" width="4.8" height="2.2" fill="#c0c0c8" opacity="0.8"/><rect x="44.55" y="40.75" width="1.3" height="8.8" fill="#fff" opacity="0.35"/><rect x="51.80" y="40.55" width="6.9" height="9.9" rx="1.2" fill="#e04040"/><rect x="52.20" y="42.95" width="6.1" height="3.6" fill="#f0f0f0"/><rect x="52.80" y="46.95" width="4.8" height="2.2" fill="#f0c030" opacity="0.8"/><rect x="53.00" y="40.75" width="1.3" height="8.8" fill="#fff" opacity="0.35"/><rect x="60.25" y="40.55" width="6.9" height="9.9" rx="1.2" fill="#3070b0"/><rect x="60.65" y="42.95" width="6.1" height="3.6" fill="#e0a040"/><rect x="61.25" y="46.95" width="4.8" height="2.2" fill="#ffffff" opacity="0.8"/><rect x="61.45" y="40.75" width="1.3" height="8.8" fill="#fff" opacity="0.35"/><rect x="68.70" y="40.55" width="6.9" height="9.9" rx="1.2" fill="#f0f0f0"/><rect x="69.10" y="42.95" width="6.1" height="3.6" fill="#d04040"/><rect x="69.70" y="46.95" width="4.8" height="2.2" fill="#e8d8a0" opacity="0.8"/><rect x="69.90" y="40.75" width="1.3" height="8.8" fill="#fff" opacity="0.35"/><rect x="0" y="63.50" width="77" height="1.7" fill="#b88850"/><rect x="1.10" y="53.60" width="6.9" height="9.9" rx="1.2" fill="#c08070"/><rect x="1.50" y="56.00" width="6.1" height="3.6" fill="#e0c0b0"/><rect x="2.10" y="60.00" width="4.8" height="2.2" fill="#f0c030" opacity="0.8"/><rect x="2.30" y="53.80" width="1.3" height="8.8" fill="#fff" opacity="0.35"/><rect x="9.55" y="53.60" width="6.9" height="9.9" rx="1.2" fill="#f0d040"/><rect x="9.95" y="56.00" width="6.1" height="3.6" fill="#e0b020"/><rect x="10.55" y="60.00" width="4.8" height="2.2" fill="#40a050" opacity="0.8"/><rect x="10.75" y="53.80" width="1.3" height="8.8" fill="#fff" opacity="0.35"/><rect x="18.00" y="53.60" width="6.9" height="9.9" rx="1.2" fill="#9050a0"/><rect x="18.40" y="56.00" width="6.1" height="3.6" fill="#e070a0"/><rect x="19.00" y="60.00" width="4.8" height="2.2" fill="#3060b0" opacity="0.8"/><rect x="19.20" y="53.80" width="1.3" height="8.8" fill="#fff" opacity="0.35"/><rect x="26.45" y="53.60" width="6.9" height="9.9" rx="1.2" fill="#40a060"/><rect x="26.85" y="56.00" width="6.1" height="3.6" fill="#f0f0f0"/><rect x="27.45" y="60.00" width="4.8" height="2.2" fill="#f0c030" opacity="0.8"/><rect x="27.65" y="53.80" width="1.3" height="8.8" fill="#fff" opacity="0.35"/><rect x="34.90" y="53.60" width="6.9" height="9.9" rx="1.2" fill="#a0a0a0"/><rect x="35.30" y="56.00" width="6.1" height="3.6" fill="#f0f0f0"/><rect x="35.90" y="60.00" width="4.8" height="2.2" fill="#f4f0e8" opacity="0.8"/><rect x="36.10" y="53.80" width="1.3" height="8.8" fill="#fff" opacity="0.35"/><rect x="43.35" y="53.60" width="6.9" height="9.9" rx="1.2" fill="#f0f0f0"/><rect x="43.75" y="56.00" width="6.1" height="3.6" fill="#3060b0"/><rect x="44.35" y="60.00" width="4.8" height="2.2" fill="#e8d8a0" opacity="0.8"/><rect x="44.55" y="53.80" width="1.3" height="8.8" fill="#fff" opacity="0.35"/><rect x="51.80" y="53.60" width="6.9" height="9.9" rx="1.2" fill="#f0d050"/><rect x="52.20" y="56.00" width="6.1" height="3.6" fill="#c0a030"/><rect x="52.80" y="60.00" width="4.8" height="2.2" fill="#e8d8a0" opacity="0.8"/><rect x="53.00" y="53.80" width="1.3" height="8.8" fill="#fff" opacity="0.35"/><rect x="60.25" y="53.60" width="6.9" height="9.9" rx="1.2" fill="#e04050"/><rect x="60.65" y="56.00" width="6.1" height="3.6" fill="#f0a0a0"/><rect x="61.25" y="60.00" width="4.8" height="2.2" fill="#ffffff" opacity="0.8"/><rect x="61.45" y="53.80" width="1.3" height="8.8" fill="#fff" opacity="0.35"/><rect x="68.70" y="53.60" width="6.9" height="9.9" rx="1.2" fill="#f0e0b0"/><rect x="69.10" y="56.00" width="6.1" height="3.6" fill="#c08040"/><rect x="69.70" y="60.00" width="4.8" height="2.2" fill="#e8d8a0" opacity="0.8"/><rect x="69.90" y="53.80" width="1.3" height="8.8" fill="#fff" opacity="0.35"/><rect x="0" y="76.55" width="77" height="1.7" fill="#b88850"/><rect x="1.10" y="66.65" width="6.9" height="9.9" rx="1.2" fill="#3070c0"/><rect x="1.50" y="69.05" width="6.1" height="3.6" fill="#e09030"/><rect x="2.10" y="73.05" width="4.8" height="2.2" fill="#f0c030" opacity="0.8"/><rect x="2.30" y="66.85" width="1.3" height="8.8" fill="#fff" opacity="0.35"/><rect x="9.55" y="66.65" width="6.9" height="9.9" rx="1.2" fill="#f0e060"/><rect x="9.95" y="69.05" width="6.1" height="3.6" fill="#5080c0"/><rect x="10.55" y="73.05" width="4.8" height="2.2" fill="#ffffff" opacity="0.8"/><rect x="10.75" y="66.85" width="1.3" height="8.8" fill="#fff" opacity="0.35"/><rect x="18.00" y="66.65" width="6.9" height="9.9" rx="1.2" fill="#e8c040"/><rect x="18.40" y="69.05" width="6.1" height="3.6" fill="#3060c0"/><rect x="19.00" y="73.05" width="4.8" height="2.2" fill="#e8d8a0" opacity="0.8"/><rect x="19.20" y="66.85" width="1.3" height="8.8" fill="#fff" opacity="0.35"/><rect x="26.45" y="66.65" width="6.9" height="9.9" rx="1.2" fill="#e0d0a0"/><rect x="26.85" y="69.05" width="6.1" height="3.6" fill="#504030"/><rect x="27.45" y="73.05" width="4.8" height="2.2" fill="#f4f0e8" opacity="0.8"/><rect x="27.65" y="66.85" width="1.3" height="8.8" fill="#fff" opacity="0.35"/><rect x="34.90" y="66.65" width="6.9" height="9.9" rx="1.2" fill="#3060b0"/><rect x="35.30" y="69.05" width="6.1" height="3.6" fill="#c0c0e0"/><rect x="35.90" y="73.05" width="4.8" height="2.2" fill="#f4f0e8" opacity="0.8"/><rect x="36.10" y="66.85" width="1.3" height="8.8" fill="#fff" opacity="0.35"/><rect x="43.35" y="66.65" width="6.9" height="9.9" rx="1.2" fill="#40b050"/><rect x="43.75" y="69.05" width="6.1" height="3.6" fill="#f0f0f0"/><rect x="44.35" y="73.05" width="4.8" height="2.2" fill="#3060b0" opacity="0.8"/><rect x="44.55" y="66.85" width="1.3" height="8.8" fill="#fff" opacity="0.35"/><rect x="51.80" y="66.65" width="6.9" height="9.9" rx="1.2" fill="#6080b0"/><rect x="52.20" y="69.05" width="6.1" height="3.6" fill="#c0c0d0"/><rect x="52.80" y="73.05" width="4.8" height="2.2" fill="#3060b0" opacity="0.8"/><rect x="53.00" y="66.85" width="1.3" height="8.8" fill="#fff" opacity="0.35"/><rect x="60.25" y="66.65" width="6.9" height="9.9" rx="1.2" fill="#e06030"/><rect x="60.65" y="69.05" width="6.1" height="3.6" fill="#d04040"/><rect x="61.25" y="73.05" width="4.8" height="2.2" fill="#f4f0e8" opacity="0.8"/><rect x="61.45" y="66.85" width="1.3" height="8.8" fill="#fff" opacity="0.35"/><rect x="68.70" y="66.65" width="6.9" height="9.9" rx="1.2" fill="#2050c0"/><rect x="69.10" y="69.05" width="6.1" height="3.6" fill="#f0f0f0"/><rect x="69.70" y="73.05" width="4.8" height="2.2" fill="#c0c0c8" opacity="0.8"/><rect x="69.90" y="66.85" width="1.3" height="8.8" fill="#fff" opacity="0.35"/></svg><div class="a t " style="left:309.8px;top:333px;font-size:8px;letter-spacing:-0.2px;color:#111">掌柜<span class="m">id:&nbsp;</span>飞杨<span class="m">20008</span></div><div class="a t " style="left:309.8px;top:350.0px;font-size:8px;letter-spacing:-0.2px;color:#111;line-height:8px">标题：御工坊木质<span class="m">500</span>片<span class="m">/1000</span></div><div class="a t " style="left:309.8px;top:357.9px;font-size:8px;letter-spacing:-0.2px;color:#111;line-height:8px">片拼图汽水罐易拉罐可乐罐成</div><div class="a t " style="left:309.8px;top:365.8px;font-size:8px;letter-spacing:-0.2px;color:#111;line-height:8px">人儿童益智玩具</div><div class="a t " style="left:309.8px;top:403.2px;font-size:8px;letter-spacing:-0.2px;color:#111">价格：<span class="m">58.00</span></div><div class="a " style="left:231px;top:418.3px;width:85.3px;height:16.6px;border:1px solid #3c9fd8;border-radius:2.5px;box-sizing:border-box;background:linear-gradient(to bottom,#f4f4f4 0%,#ebebeb 48%,#dcdcdc 52%,#cfcfcf 100%);box-shadow:inset 0 0 0 1px #9fd6f2;display:flex;align-items:center;justify-content:center;font-size:8px;letter-spacing:-0.2px;color:#111">在浏览器中打开链接</div><div class="a " style="left:322.5px;top:418.3px;width:84.2px;height:17px;border:1px solid #707070;border-radius:2.5px;box-sizing:border-box;background:linear-gradient(to bottom,#f4f4f4 0%,#ebebeb 48%,#dcdcdc 52%,#cfcfcf 100%);box-shadow:inset 0 0 0 1px rgba(255,255,255,0.7);display:flex;align-items:center;justify-content:center;font-size:8px;letter-spacing:-0.2px;color:#111">显示掌柜宝贝排名</div><div class="a " style="left:231.3px;top:440.4px;width:85px;height:15.6px;border:1px solid #707070;border-radius:2.5px;box-sizing:border-box;background:linear-gradient(to bottom,#f4f4f4 0%,#ebebeb 48%,#dcdcdc 52%,#cfcfcf 100%);box-shadow:inset 0 0 0 1px rgba(255,255,255,0.7);display:flex;align-items:center;justify-content:center;font-size:8px;letter-spacing:-0.2px;color:#111">打开主题图片</div><div class="a " style="left:322.5px;top:440.3px;width:84.2px;height:16.2px;border:1px solid #707070;border-radius:2.5px;box-sizing:border-box;background:linear-gradient(to bottom,#f4f4f4 0%,#ebebeb 48%,#dcdcdc 52%,#cfcfcf 100%);box-shadow:inset 0 0 0 1px rgba(255,255,255,0.7);display:flex;align-items:center;justify-content:center;font-size:8px;letter-spacing:-0.2px;color:#111">关闭窗口</div>
</body></html>
